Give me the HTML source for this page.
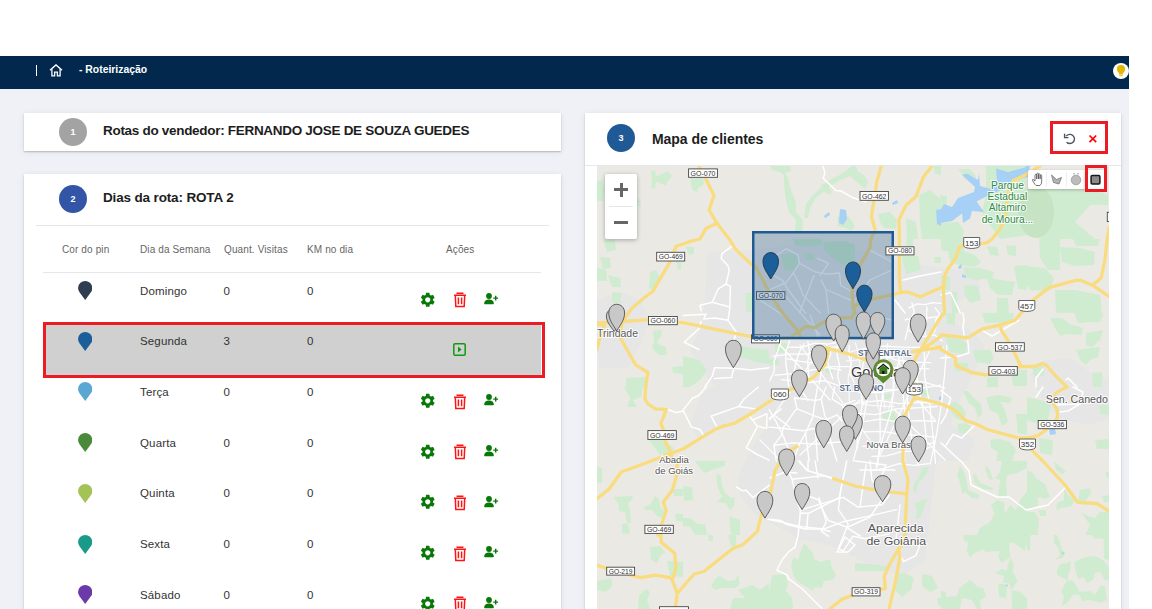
<!DOCTYPE html>
<html><head><meta charset="utf-8">
<style>
*{box-sizing:border-box;margin:0;padding:0}
html,body{width:1152px;height:609px;overflow:hidden;background:#fff;font-family:"Liberation Sans",sans-serif;position:relative}
.abs{position:absolute}
#nav{left:0;top:56px;width:1129px;height:33px;background:#02294d;overflow:hidden}
#bg{left:0;top:89px;width:1129px;height:520px;background:#f0f1f6}
.card{position:absolute;background:#fff;box-shadow:0 1px 1.5px rgba(0,0,0,0.22),0 1px 7px rgba(0,0,0,0.07)}
.circ{position:absolute;width:28px;height:28px;border-radius:50%;color:#fff;font-size:9px;font-weight:bold;text-align:center;line-height:28px}
.ttl{position:absolute;font-size:14px;font-weight:bold;color:#1d1d1d;white-space:nowrap;letter-spacing:-0.1px}
.th{position:absolute;font-size:10px;color:#666;white-space:nowrap;top:243.5px;letter-spacing:0.12px}
.td{position:absolute;font-size:11.5px;color:#333;white-space:nowrap;letter-spacing:0.15px}
.hr{position:absolute;height:1px;background:#e6e7ec}
</style></head><body>
<div id="nav" class="abs">
  <div class="abs" style="left:36px;top:9px;width:1px;height:11px;background:#fff"></div>
  <svg class="abs" style="left:49px;top:8px" width="14" height="13" viewBox="0 0 14 13"><path d="M1 6.3 L7 0.9 L13 6.3" fill="none" stroke="#fff" stroke-width="1.4" stroke-linejoin="miter"/><path d="M2.9 5.2 V11.9 H5.6 V8.2 H8.4 V11.9 H11.1 V5.2" fill="none" stroke="#fff" stroke-width="1.3"/></svg>
  <div class="abs" style="left:79px;top:8px;font-size:10.4px;font-weight:bold;color:#fff;letter-spacing:0px">- Roteirização</div>
  <div class="abs" style="left:1113px;top:7px;width:16px;height:16px;border-radius:50%;background:#fff"></div>
  <svg class="abs" style="left:1115px;top:8px" width="12" height="14" viewBox="0 0 12 14"><circle cx="6" cy="5" r="4.1" fill="#e5b800"/><path d="M3.6 7.5 H8.4 L7.9 10.6 H4.1Z" fill="#e5b800"/><rect x="4.3" y="10.9" width="3.4" height="1.4" fill="#ecc850"/></svg>
</div>
<div id="bg" class="abs"></div>

<!-- card 1 -->
<div class="card" style="left:24px;top:113px;width:537px;height:38px"></div>
<div class="circ" style="left:59px;top:118px;background:#a3a3a3">1</div>
<div class="ttl" style="left:103px;top:123px;font-size:13.5px;letter-spacing:-0.3px">Rotas do vendedor: FERNANDO JOSE DE SOUZA GUEDES</div>

<!-- card 2 -->
<div class="card" style="left:24px;top:174px;width:537px;height:460px"></div>
<div class="circ" style="left:59px;top:185px;background:#3355a5">2</div>
<div class="ttl" style="left:103px;top:190px;font-size:13.5px;letter-spacing:-0.15px">Dias da rota: ROTA 2</div>
<div class="hr" style="left:36px;top:225px;width:513px"></div>
<div class="th" style="left:62px">Cor do pin</div>
<div class="th" style="left:140px">Dia da Semana</div>
<div class="th" style="left:224px">Quant. Visitas</div>
<div class="th" style="left:307px">KM no dia</div>
<div class="th" style="left:446px">Ações</div>
<div class="hr" style="left:43px;top:272px;width:498px"></div>

<div id="rows">
<svg class="abs" style="left:78px;top:281.0px" width="14.4" height="19" viewBox="0 0 14.4 19"><path d="M7.2 19 L1.5 11.34 A7.1 7.1 0 1 1 12.9 11.34 Z" fill="#2d3e50"/></svg>
<div class="td" style="left:140px;top:284.5px">Domingo</div>
<div class="td" style="left:223.5px;top:284.5px">0</div>
<div class="td" style="left:307px;top:284.5px">0</div>
<svg class="abs" style="left:418.65px;top:290.55px" width="17.5" height="17.5" viewBox="0 0 24 24"><path fill="#087808" d="M19.14 12.94c.04-.3.06-.61.06-.94 0-.32-.02-.64-.07-.94l2.03-1.58a.49.49 0 0 0 .12-.61l-1.92-3.32a.488.488 0 0 0-.59-.22l-2.39.96c-.5-.38-1.03-.7-1.62-.94l-.36-2.54a.484.484 0 0 0-.48-.41h-3.84c-.24 0-.43.17-.47.41l-.36 2.54c-.59.24-1.13.57-1.62.94l-2.39-.96a.49.49 0 0 0-.59.22L2.74 8.87c-.12.21-.08.47.12.61l2.03 1.58c-.05.3-.09.63-.09.94s.02.64.07.94l-2.03 1.58a.49.49 0 0 0-.12.61l1.92 3.32c.12.22.37.29.59.22l2.39-.96c.5.38 1.03.7 1.62.94l.36 2.54c.05.24.24.41.48.41h3.84c.24 0 .44-.17.47-.41l.36-2.54c.59-.24 1.13-.56 1.62-.94l2.39.96c.22.08.47 0 .59-.22l1.92-3.32c.12-.22.07-.47-.12-.61l-2.01-1.58zM12 15.6c-1.98 0-3.6-1.62-3.6-3.6s1.62-3.6 3.6-3.6 3.6 1.62 3.6 3.6-1.62 3.6-3.6 3.6z"/></svg>
<svg class="abs" style="left:452.5px;top:292.1px" width="14" height="16" viewBox="0 0 14 16"><path d="M3.5 1.3 H10.5 M1 3.2 H13 M2.3 3.2 L2.8 14.6 H11.2 L11.7 3.2 M5.4 5.5 V12.3 M8.6 5.5 V12.3" fill="none" stroke="#ff1414" stroke-width="1.5"/></svg>
<svg class="abs" style="left:484.0px;top:292.8px" width="15" height="12" viewBox="0 0 15 12"><circle cx="5" cy="3" r="2.9" fill="#087808"/><path d="M0.2 10.6 C0.2 7.4 2.5 6.4 5 6.4 C7.5 6.4 9.8 7.4 9.8 10.6 Q9.8 11.2 9.2 11.2 H0.8 Q0.2 11.2 0.2 10.6Z" fill="#087808"/><path d="M9.3 5.1 H14.1 M11.7 2.7 V7.5" stroke="#087808" stroke-width="1.4"/></svg>
<div class="abs" style="left:43px;top:322.3px;width:498px;height:55.5px;background:#d0d0d0"></div>
<div class="abs" style="left:43px;top:322.3px;width:502px;height:55.5px;border:3px solid #ec1c24"></div>
<svg class="abs" style="left:78px;top:331.7px" width="14.4" height="19" viewBox="0 0 14.4 19"><path d="M7.2 19 L1.5 11.34 A7.1 7.1 0 1 1 12.9 11.34 Z" fill="#1a5e9a"/></svg>
<div class="td" style="left:140px;top:335.2px">Segunda</div>
<div class="td" style="left:223.5px;top:335.2px">3</div>
<div class="td" style="left:307px;top:335.2px">0</div>
<svg class="abs" style="left:453px;top:343px" width="13" height="13" viewBox="0 0 13 13"><rect x="0.8" y="0.8" width="11.4" height="11.4" rx="1.2" fill="none" stroke="#119911" stroke-width="1.5"/><path d="M5 3.6 L8.6 6.5 L5 9.4Z" fill="#119911"/></svg>
<svg class="abs" style="left:78px;top:382.4px" width="14.4" height="19" viewBox="0 0 14.4 19"><path d="M7.2 19 L1.5 11.34 A7.1 7.1 0 1 1 12.9 11.34 Z" fill="#5aa7d3"/></svg>
<div class="td" style="left:140px;top:385.9px">Terça</div>
<div class="td" style="left:223.5px;top:385.9px">0</div>
<div class="td" style="left:307px;top:385.9px">0</div>
<svg class="abs" style="left:418.65px;top:391.95px" width="17.5" height="17.5" viewBox="0 0 24 24"><path fill="#087808" d="M19.14 12.94c.04-.3.06-.61.06-.94 0-.32-.02-.64-.07-.94l2.03-1.58a.49.49 0 0 0 .12-.61l-1.92-3.32a.488.488 0 0 0-.59-.22l-2.39.96c-.5-.38-1.03-.7-1.62-.94l-.36-2.54a.484.484 0 0 0-.48-.41h-3.84c-.24 0-.43.17-.47.41l-.36 2.54c-.59.24-1.13.57-1.62.94l-2.39-.96a.49.49 0 0 0-.59.22L2.74 8.87c-.12.21-.08.47.12.61l2.03 1.58c-.05.3-.09.63-.09.94s.02.64.07.94l-2.03 1.58a.49.49 0 0 0-.12.61l1.92 3.32c.12.22.37.29.59.22l2.39-.96c.5.38 1.03.7 1.62.94l.36 2.54c.05.24.24.41.48.41h3.84c.24 0 .44-.17.47-.41l.36-2.54c.59-.24 1.13-.56 1.62-.94l2.39.96c.22.08.47 0 .59-.22l1.92-3.32c.12-.22.07-.47-.12-.61l-2.01-1.58zM12 15.6c-1.98 0-3.6-1.62-3.6-3.6s1.62-3.6 3.6-3.6 3.6 1.62 3.6 3.6-1.62 3.6-3.6 3.6z"/></svg>
<svg class="abs" style="left:452.5px;top:393.5px" width="14" height="16" viewBox="0 0 14 16"><path d="M3.5 1.3 H10.5 M1 3.2 H13 M2.3 3.2 L2.8 14.6 H11.2 L11.7 3.2 M5.4 5.5 V12.3 M8.6 5.5 V12.3" fill="none" stroke="#ff1414" stroke-width="1.5"/></svg>
<svg class="abs" style="left:484.0px;top:394.2px" width="15" height="12" viewBox="0 0 15 12"><circle cx="5" cy="3" r="2.9" fill="#087808"/><path d="M0.2 10.6 C0.2 7.4 2.5 6.4 5 6.4 C7.5 6.4 9.8 7.4 9.8 10.6 Q9.8 11.2 9.2 11.2 H0.8 Q0.2 11.2 0.2 10.6Z" fill="#087808"/><path d="M9.3 5.1 H14.1 M11.7 2.7 V7.5" stroke="#087808" stroke-width="1.4"/></svg>
<svg class="abs" style="left:78px;top:433.1px" width="14.4" height="19" viewBox="0 0 14.4 19"><path d="M7.2 19 L1.5 11.34 A7.1 7.1 0 1 1 12.9 11.34 Z" fill="#4a8a3a"/></svg>
<div class="td" style="left:140px;top:436.6px">Quarta</div>
<div class="td" style="left:223.5px;top:436.6px">0</div>
<div class="td" style="left:307px;top:436.6px">0</div>
<svg class="abs" style="left:418.65px;top:442.65px" width="17.5" height="17.5" viewBox="0 0 24 24"><path fill="#087808" d="M19.14 12.94c.04-.3.06-.61.06-.94 0-.32-.02-.64-.07-.94l2.03-1.58a.49.49 0 0 0 .12-.61l-1.92-3.32a.488.488 0 0 0-.59-.22l-2.39.96c-.5-.38-1.03-.7-1.62-.94l-.36-2.54a.484.484 0 0 0-.48-.41h-3.84c-.24 0-.43.17-.47.41l-.36 2.54c-.59.24-1.13.57-1.62.94l-2.39-.96a.49.49 0 0 0-.59.22L2.74 8.87c-.12.21-.08.47.12.61l2.03 1.58c-.05.3-.09.63-.09.94s.02.64.07.94l-2.03 1.58a.49.49 0 0 0-.12.61l1.92 3.32c.12.22.37.29.59.22l2.39-.96c.5.38 1.03.7 1.62.94l.36 2.54c.05.24.24.41.48.41h3.84c.24 0 .44-.17.47-.41l.36-2.54c.59-.24 1.13-.56 1.62-.94l2.39.96c.22.08.47 0 .59-.22l1.92-3.32c.12-.22.07-.47-.12-.61l-2.01-1.58zM12 15.6c-1.98 0-3.6-1.62-3.6-3.6s1.62-3.6 3.6-3.6 3.6 1.62 3.6 3.6-1.62 3.6-3.6 3.6z"/></svg>
<svg class="abs" style="left:452.5px;top:444.2px" width="14" height="16" viewBox="0 0 14 16"><path d="M3.5 1.3 H10.5 M1 3.2 H13 M2.3 3.2 L2.8 14.6 H11.2 L11.7 3.2 M5.4 5.5 V12.3 M8.6 5.5 V12.3" fill="none" stroke="#ff1414" stroke-width="1.5"/></svg>
<svg class="abs" style="left:484.0px;top:444.9px" width="15" height="12" viewBox="0 0 15 12"><circle cx="5" cy="3" r="2.9" fill="#087808"/><path d="M0.2 10.6 C0.2 7.4 2.5 6.4 5 6.4 C7.5 6.4 9.8 7.4 9.8 10.6 Q9.8 11.2 9.2 11.2 H0.8 Q0.2 11.2 0.2 10.6Z" fill="#087808"/><path d="M9.3 5.1 H14.1 M11.7 2.7 V7.5" stroke="#087808" stroke-width="1.4"/></svg>
<svg class="abs" style="left:78px;top:483.8px" width="14.4" height="19" viewBox="0 0 14.4 19"><path d="M7.2 19 L1.5 11.34 A7.1 7.1 0 1 1 12.9 11.34 Z" fill="#a2c355"/></svg>
<div class="td" style="left:140px;top:487.3px">Quinta</div>
<div class="td" style="left:223.5px;top:487.3px">0</div>
<div class="td" style="left:307px;top:487.3px">0</div>
<svg class="abs" style="left:418.65px;top:493.35px" width="17.5" height="17.5" viewBox="0 0 24 24"><path fill="#087808" d="M19.14 12.94c.04-.3.06-.61.06-.94 0-.32-.02-.64-.07-.94l2.03-1.58a.49.49 0 0 0 .12-.61l-1.92-3.32a.488.488 0 0 0-.59-.22l-2.39.96c-.5-.38-1.03-.7-1.62-.94l-.36-2.54a.484.484 0 0 0-.48-.41h-3.84c-.24 0-.43.17-.47.41l-.36 2.54c-.59.24-1.13.57-1.62.94l-2.39-.96a.49.49 0 0 0-.59.22L2.74 8.87c-.12.21-.08.47.12.61l2.03 1.58c-.05.3-.09.63-.09.94s.02.64.07.94l-2.03 1.58a.49.49 0 0 0-.12.61l1.92 3.32c.12.22.37.29.59.22l2.39-.96c.5.38 1.03.7 1.62.94l.36 2.54c.05.24.24.41.48.41h3.84c.24 0 .44-.17.47-.41l.36-2.54c.59-.24 1.13-.56 1.62-.94l2.39.96c.22.08.47 0 .59-.22l1.92-3.32c.12-.22.07-.47-.12-.61l-2.01-1.58zM12 15.6c-1.98 0-3.6-1.62-3.6-3.6s1.62-3.6 3.6-3.6 3.6 1.62 3.6 3.6-1.62 3.6-3.6 3.6z"/></svg>
<svg class="abs" style="left:452.5px;top:494.9px" width="14" height="16" viewBox="0 0 14 16"><path d="M3.5 1.3 H10.5 M1 3.2 H13 M2.3 3.2 L2.8 14.6 H11.2 L11.7 3.2 M5.4 5.5 V12.3 M8.6 5.5 V12.3" fill="none" stroke="#ff1414" stroke-width="1.5"/></svg>
<svg class="abs" style="left:484.0px;top:495.6px" width="15" height="12" viewBox="0 0 15 12"><circle cx="5" cy="3" r="2.9" fill="#087808"/><path d="M0.2 10.6 C0.2 7.4 2.5 6.4 5 6.4 C7.5 6.4 9.8 7.4 9.8 10.6 Q9.8 11.2 9.2 11.2 H0.8 Q0.2 11.2 0.2 10.6Z" fill="#087808"/><path d="M9.3 5.1 H14.1 M11.7 2.7 V7.5" stroke="#087808" stroke-width="1.4"/></svg>
<svg class="abs" style="left:78px;top:534.5px" width="14.4" height="19" viewBox="0 0 14.4 19"><path d="M7.2 19 L1.5 11.34 A7.1 7.1 0 1 1 12.9 11.34 Z" fill="#1a9a88"/></svg>
<div class="td" style="left:140px;top:538.0px">Sexta</div>
<div class="td" style="left:223.5px;top:538.0px">0</div>
<div class="td" style="left:307px;top:538.0px">0</div>
<svg class="abs" style="left:418.65px;top:544.05px" width="17.5" height="17.5" viewBox="0 0 24 24"><path fill="#087808" d="M19.14 12.94c.04-.3.06-.61.06-.94 0-.32-.02-.64-.07-.94l2.03-1.58a.49.49 0 0 0 .12-.61l-1.92-3.32a.488.488 0 0 0-.59-.22l-2.39.96c-.5-.38-1.03-.7-1.62-.94l-.36-2.54a.484.484 0 0 0-.48-.41h-3.84c-.24 0-.43.17-.47.41l-.36 2.54c-.59.24-1.13.57-1.62.94l-2.39-.96a.49.49 0 0 0-.59.22L2.74 8.87c-.12.21-.08.47.12.61l2.03 1.58c-.05.3-.09.63-.09.94s.02.64.07.94l-2.03 1.58a.49.49 0 0 0-.12.61l1.92 3.32c.12.22.37.29.59.22l2.39-.96c.5.38 1.03.7 1.62.94l.36 2.54c.05.24.24.41.48.41h3.84c.24 0 .44-.17.47-.41l.36-2.54c.59-.24 1.13-.56 1.62-.94l2.39.96c.22.08.47 0 .59-.22l1.92-3.32c.12-.22.07-.47-.12-.61l-2.01-1.58zM12 15.6c-1.98 0-3.6-1.62-3.6-3.6s1.62-3.6 3.6-3.6 3.6 1.62 3.6 3.6-1.62 3.6-3.6 3.6z"/></svg>
<svg class="abs" style="left:452.5px;top:545.6px" width="14" height="16" viewBox="0 0 14 16"><path d="M3.5 1.3 H10.5 M1 3.2 H13 M2.3 3.2 L2.8 14.6 H11.2 L11.7 3.2 M5.4 5.5 V12.3 M8.6 5.5 V12.3" fill="none" stroke="#ff1414" stroke-width="1.5"/></svg>
<svg class="abs" style="left:484.0px;top:546.3px" width="15" height="12" viewBox="0 0 15 12"><circle cx="5" cy="3" r="2.9" fill="#087808"/><path d="M0.2 10.6 C0.2 7.4 2.5 6.4 5 6.4 C7.5 6.4 9.8 7.4 9.8 10.6 Q9.8 11.2 9.2 11.2 H0.8 Q0.2 11.2 0.2 10.6Z" fill="#087808"/><path d="M9.3 5.1 H14.1 M11.7 2.7 V7.5" stroke="#087808" stroke-width="1.4"/></svg>
<svg class="abs" style="left:78px;top:585.2px" width="14.4" height="19" viewBox="0 0 14.4 19"><path d="M7.2 19 L1.5 11.34 A7.1 7.1 0 1 1 12.9 11.34 Z" fill="#6c3aa8"/></svg>
<div class="td" style="left:140px;top:588.7px">Sábado</div>
<div class="td" style="left:223.5px;top:588.7px">0</div>
<div class="td" style="left:307px;top:588.7px">0</div>
<svg class="abs" style="left:418.65px;top:594.75px" width="17.5" height="17.5" viewBox="0 0 24 24"><path fill="#087808" d="M19.14 12.94c.04-.3.06-.61.06-.94 0-.32-.02-.64-.07-.94l2.03-1.58a.49.49 0 0 0 .12-.61l-1.92-3.32a.488.488 0 0 0-.59-.22l-2.39.96c-.5-.38-1.03-.7-1.62-.94l-.36-2.54a.484.484 0 0 0-.48-.41h-3.84c-.24 0-.43.17-.47.41l-.36 2.54c-.59.24-1.13.57-1.62.94l-2.39-.96a.49.49 0 0 0-.59.22L2.74 8.87c-.12.21-.08.47.12.61l2.03 1.58c-.05.3-.09.63-.09.94s.02.64.07.94l-2.03 1.58a.49.49 0 0 0-.12.61l1.92 3.32c.12.22.37.29.59.22l2.39-.96c.5.38 1.03.7 1.62.94l.36 2.54c.05.24.24.41.48.41h3.84c.24 0 .44-.17.47-.41l.36-2.54c.59-.24 1.13-.56 1.62-.94l2.39.96c.22.08.47 0 .59-.22l1.92-3.32c.12-.22.07-.47-.12-.61l-2.01-1.58zM12 15.6c-1.98 0-3.6-1.62-3.6-3.6s1.62-3.6 3.6-3.6 3.6 1.62 3.6 3.6-1.62 3.6-3.6 3.6z"/></svg>
<svg class="abs" style="left:452.5px;top:596.3px" width="14" height="16" viewBox="0 0 14 16"><path d="M3.5 1.3 H10.5 M1 3.2 H13 M2.3 3.2 L2.8 14.6 H11.2 L11.7 3.2 M5.4 5.5 V12.3 M8.6 5.5 V12.3" fill="none" stroke="#ff1414" stroke-width="1.5"/></svg>
<svg class="abs" style="left:484.0px;top:597.0px" width="15" height="12" viewBox="0 0 15 12"><circle cx="5" cy="3" r="2.9" fill="#087808"/><path d="M0.2 10.6 C0.2 7.4 2.5 6.4 5 6.4 C7.5 6.4 9.8 7.4 9.8 10.6 Q9.8 11.2 9.2 11.2 H0.8 Q0.2 11.2 0.2 10.6Z" fill="#087808"/><path d="M9.3 5.1 H14.1 M11.7 2.7 V7.5" stroke="#087808" stroke-width="1.4"/></svg>
</div>
<!--endrows-->

<!-- card 3 -->
<div class="card" style="left:585px;top:113px;width:536px;height:520px"></div>
<div class="circ" style="left:607px;top:124px;background:#1f5a96">3</div>
<div class="ttl" style="left:652px;top:131px;letter-spacing:-0.05px">Mapa de clientes</div>
<div class="hr" style="left:585px;top:165px;width:536px"></div>
<!--map--><svg id="map" class="abs" style="left:597px;top:166px" width="512" height="443" viewBox="597 166 512 443">
<rect x="597" y="166" width="512" height="443" fill="#ebe9e4"/>
<polygon points="707,252 752,250 800,245 860,250 900,262 945,268 975,272 980,290 960,300 945,320 970,330 985,345 975,372 960,400 945,440 935,470 930,520 925,560 905,575 880,570 860,560 830,545 800,540 780,528 770,522 755,515 740,495 738,478 750,450 768,425 760,410 735,420 700,440 690,425 700,395 715,385 700,370 690,350 700,330 705,300" fill="#e6e6e7"/>
<polygon points="597,300 620,292 640,300 650,318 640,345 628,368 600,368 597,350" fill="#e6e6e7"/>
<polygon points="1030,375 1045,360 1070,358 1090,372 1109,380 1109,420 1085,425 1060,418 1045,405" fill="#e6e6e7"/>
<polygon points="941,420 960,430 975,440 968,461 941,461" fill="#e6e6e7"/>
<polygon points="950,272 978,272 980,290 952,290" fill="#e6e6e7"/>
<polygon points="651,172 655,170 656,176 662,174 668,171 672,176 668,181 666,186 660,183 656,182 655,189 651,188 652,180" fill="#d0ecd0"/>
<polygon points="597,181 602,180 605,190 603,198 605,201 597,201" fill="#d0ecd0"/>
<polygon points="637,198 640,200 641,207 638,206" fill="#d0ecd0"/>
<polygon points="690,178 703,178 704,184 698,188 697,192 693,190 691,185" fill="#d0ecd0"/>
<polygon points="686,246 693,247 694,253 690,255 687,251" fill="#d0ecd0"/>
<polygon points="770,166 790,166 791,171 785,173 788,178 792,193 796,203 796,212 803,220 802,232 795,232 796,220 789,212 786,200 784,185 784,175 780,172 772,170" fill="#d0ecd0"/>
<polygon points="804,218 806,204 812,196 818,190 828,181 838,176 846,171 852,166 856,166 858,172 864,175 868,182 865,189 858,183 850,176 840,180 830,186 816,198 810,208 808,218" fill="#d0ecd0"/>
<polygon points="821,185 826,183 832,192 830,195 824,192" fill="#d0ecd0"/>
<polygon points="837,218 842,212 850,218 855,226 852,231 845,228 838,226" fill="#d0ecd0"/>
<polygon points="878,214 890,212 897,220 896,229 884,228 880,222" fill="#d0ecd0"/>
<polygon points="906,218 916,222 918,239 907,239" fill="#d0ecd0"/>
<polygon points="919,195 930,190 941,200 941,239 922,239 920,222" fill="#d0ecd0"/>
<polygon points="933,166 941,166 941,175 935,174" fill="#d0ecd0"/>
<polygon points="958,169 970,169 976,176 975,182 966,180" fill="#d0ecd0"/>
<polygon points="940,195 947,196 947,211 940,211" fill="#d0ecd0"/>
<polygon points="940,223 958,222 964,230 962,239 941,239" fill="#d0ecd0"/>
<polygon points="986,166 1026,166 1026,189 1048,189 1060,185 1090,189 1108,195 1108,205 1090,205 1075,222 1095,239 1043,239 1030,235 1000,239 990,225 982,212 986,195" fill="#d0ecd0"/>
<polygon points="941,239 964,239 964,251 950,252 941,250" fill="#d0ecd0"/>
<polygon points="948,251 960,250 975,255 981,262 975,267 960,265 950,262" fill="#d0ecd0"/>
<polygon points="963,267 980,268 994,272 992,278 975,280 965,277" fill="#d0ecd0"/>
<polygon points="986,276 1000,280 1015,282 1012,295 998,295 990,288" fill="#d0ecd0"/>
<polygon points="964,285 978,286 981,300 970,303 965,296" fill="#d0ecd0"/>
<polygon points="987,246 997,247 999,256 990,255" fill="#d0ecd0"/>
<polygon points="1006,245 1016,246 1016,256 1008,255" fill="#d0ecd0"/>
<polygon points="1014,266 1027,265 1027,290 1018,289" fill="#d0ecd0"/>
<polygon points="997,298 1008,298 1009,313 997,313" fill="#d0ecd0"/>
<polygon points="941,276 950,276 950,290 941,290" fill="#d0ecd0"/>
<polygon points="951,292 957,292 958,313 952,313" fill="#d0ecd0"/>
<polygon points="1039,239 1060,239 1060,270 1048,270 1040,258" fill="#d0ecd0"/>
<polygon points="1060,247 1080,248 1095,252 1094,265 1075,266 1062,262" fill="#d0ecd0"/>
<polygon points="1073,239 1100,239 1098,246 1076,246" fill="#d0ecd0"/>
<polygon points="1027,266 1045,268 1054,278 1050,291 1030,290 1027,285" fill="#d0ecd0"/>
<polygon points="1055,290 1075,290 1100,295 1102,313 1056,313" fill="#d0ecd0"/>
<polygon points="603,239 615,240 616,250 607,252" fill="#d0ecd0"/>
<polygon points="600,257 610,258 611,268 603,269" fill="#d0ecd0"/>
<polygon points="597,268 606,270 607,281 597,281" fill="#d0ecd0"/>
<polygon points="608,275 620,278 621,287 612,287" fill="#d0ecd0"/>
<polygon points="612,292 621,293 621,303 612,303" fill="#d0ecd0"/>
<polygon points="650,272 656,270 660,278 656,289 649,289" fill="#d0ecd0"/>
<polygon points="676,261 681,262 681,270 678,270" fill="#d0ecd0"/>
<polygon points="687,247 694,247 694,254 689,255" fill="#d0ecd0"/>
<polygon points="745,293 752,293 752,312 746,312" fill="#d0ecd0"/>
<polygon points="793,239 822,239 822,246 795,246" fill="#d0ecd0"/>
<polygon points="823,242 845,241 855,245 855,268 845,266 832,258 824,250" fill="#d0ecd0"/>
<polygon points="781,254 795,253 799,262 797,270 784,270" fill="#d0ecd0"/>
<polygon points="805,253 815,254 814,260 806,260" fill="#d0ecd0"/>
<polygon points="901,255 918,256 921,270 906,274" fill="#d0ecd0"/>
<polygon points="906,239 913,239 913,246 907,246" fill="#d0ecd0"/>
<polygon points="934,257 941,257 941,263 935,263" fill="#d0ecd0"/>
<polygon points="653,331 662,330 661,336 657,342 660,345 666,347 667,355 659,355 652,348 654,340" fill="#d0ecd0"/>
<polygon points="672,367 683,366 683,374 673,373" fill="#d0ecd0"/>
<polygon points="626,378 646,377 648,387 626,387" fill="#d0ecd0"/>
<polygon points="722,345 740,346 752,348 769,350 769,364 755,362 745,358 730,356" fill="#d0ecd0"/>
<polygon points="683,356 700,360 707,370 700,380 690,387 683,387" fill="#d0ecd0"/>
<polygon points="774,344 788,343 788,352 776,353" fill="#d0ecd0"/>
<polygon points="769,359 779,359 779,365 769,365" fill="#d0ecd0"/>
<polygon points="825,368 833,368 833,373 826,373" fill="#d0ecd0"/>
<polygon points="982,313 1014,313 1012,322 985,323" fill="#d0ecd0"/>
<polygon points="945,337 960,338 968,345 965,354 950,352" fill="#d0ecd0"/>
<polygon points="973,350 990,350 994,358 990,364 976,362" fill="#d0ecd0"/>
<polygon points="953,362 968,363 969,371 956,371" fill="#d0ecd0"/>
<polygon points="987,377 998,377 998,387 987,387" fill="#d0ecd0"/>
<polygon points="1011,370 1027,370 1027,386 1013,386" fill="#d0ecd0"/>
<polygon points="946,313 955,313 955,325 947,324" fill="#d0ecd0"/>
<polygon points="1050,318 1062,318 1070,324 1083,328 1082,335 1068,334 1060,336 1055,328" fill="#d0ecd0"/>
<polygon points="1074,313 1104,313 1100,322 1078,323" fill="#d0ecd0"/>
<polygon points="1086,333 1103,330 1100,340 1092,347 1086,345" fill="#d0ecd0"/>
<polygon points="1076,350 1090,348 1100,347 1098,357 1090,360 1086,365 1080,360" fill="#d0ecd0"/>
<polygon points="1032,367 1044,366 1044,376 1034,376" fill="#d0ecd0"/>
<polygon points="1092,373 1102,372 1102,387 1093,387" fill="#d0ecd0"/>
<polygon points="624,387 643,387 641,397 633,400 637,407 627,407 630,398" fill="#d0ecd0"/>
<polygon points="649,440 662,440 674,448 672,455 660,455" fill="#d0ecd0"/>
<polygon points="882,394 891,394 890,399 883,399" fill="#d0ecd0"/>
<polygon points="882,415 893,410 898,422 885,422" fill="#d0ecd0"/>
<polygon points="919,390 930,389 929,396 920,396" fill="#d0ecd0"/>
<polygon points="949,405 955,402 962,406 966,414 963,421 955,418 951,412" fill="#d0ecd0"/>
<polygon points="963,391 968,391 974,398 981,404 982,414 978,418 975,408 968,402" fill="#d0ecd0"/>
<polygon points="986,398 992,396 1000,395 1012,398 1010,403 1000,402 1005,410 1008,422 1002,426 998,414 990,410" fill="#d0ecd0"/>
<polygon points="957,424 966,423 971,427 966,434 959,433" fill="#d0ecd0"/>
<polygon points="990,440 1000,439 1010,442 1016,450 1012,461 996,461 998,452 991,448" fill="#d0ecd0"/>
<polygon points="1016,414 1027,414 1027,435 1018,433" fill="#d0ecd0"/>
<polygon points="1027,397 1040,400 1051,405 1048,420 1035,423 1027,420" fill="#d0ecd0"/>
<polygon points="1099,405 1109,405 1109,415 1100,414" fill="#d0ecd0"/>
<polygon points="1095,440 1109,439 1109,449 1097,449" fill="#d0ecd0"/>
<polygon points="1039,438 1053,440 1052,455 1040,453" fill="#d0ecd0"/>
<polygon points="597,467 602,468 602,483 597,483" fill="#d0ecd0"/>
<polygon points="613,497 633,496 631,501 628,503 630,510 631,523 627,523 625,512 619,511 618,503" fill="#d0ecd0"/>
<polygon points="643,507 650,505 655,496 659,499 660,506 665,512 664,519 657,516 652,510 646,510" fill="#d0ecd0"/>
<polygon points="622,524 628,523 630,534 622,533" fill="#d0ecd0"/>
<polygon points="673,489 683,489 683,496 674,496" fill="#d0ecd0"/>
<polygon points="675,514 683,514 683,522 676,521" fill="#d0ecd0"/>
<polygon points="695,461 725,461 725,466 712,470 705,473 700,468" fill="#d0ecd0"/>
<polygon points="716,474 721,475 722,486 725,493 731,498 735,497 734,506 730,510 726,503 716,502 722,497 718,488" fill="#d0ecd0"/>
<polygon points="683,486 692,487 693,500 684,501" fill="#d0ecd0"/>
<polygon points="683,518 690,518 698,524 705,524 707,535 695,535 690,527 683,526" fill="#d0ecd0"/>
<polygon points="729,516 740,520 740,535 731,535" fill="#d0ecd0"/>
<polygon points="922,468 929,467 926,475 919,482 916,492 913,493 914,484 919,476" fill="#d0ecd0"/>
<polygon points="914,504 922,500 928,499 924,508 920,518 915,519 917,510" fill="#d0ecd0"/>
<polygon points="855,563 870,564 886,566 886,571 870,571 855,571" fill="#d0ecd0"/>
<polygon points="895,574 905,573 914,578 911,590 902,597 895,590" fill="#d0ecd0"/>
<polygon points="922,574 932,576 938,588 930,592 922,586" fill="#d0ecd0"/>
<polygon points="937,598 941,598 941,606 938,605" fill="#d0ecd0"/>
<polygon points="804,543 813,553 814,559 821,562 830,559 832,568 836,575 833,580 824,581 822,588 815,587 813,591 805,586 797,581 793,574 791,565 794,557 798,560" fill="#d0ecd0"/>
<polygon points="772,575 785,574 788,584 786,591 792,598 793,609 769,609 769,591" fill="#d0ecd0"/>
<polygon points="650,547 660,546 665,552 660,556 657,563 651,560" fill="#d0ecd0"/>
<polygon points="667,561 683,562 683,577 670,576" fill="#d0ecd0"/>
<polygon points="711,586 716,578 720,576 728,581 735,580 738,575 740,584 735,588 722,588 715,590" fill="#d0ecd0"/>
<polygon points="597,581 612,578 612,586 606,592 597,590" fill="#d0ecd0"/>
<polygon points="639,595 646,589 650,592 647,600 650,609 638,609" fill="#d0ecd0"/>
<polygon points="738,590 752,585 760,590 769,583 769,609 730,609 733,598 745,598" fill="#d0ecd0"/>
<polygon points="708,535 713,535 713,541 709,541" fill="#d0ecd0"/>
<polygon points="728,535 736,535 736,547 731,546" fill="#d0ecd0"/>
<polygon points="957,475 960,466 963,470 966,478 968,490 975,493 980,495 978,499 972,498 965,492 962,494 961,488 959,480" fill="#d0ecd0"/>
<polygon points="972.6,474 976,475 980,483 988,486 994,489 992,490 983,489 975,484" fill="#d0ecd0"/>
<polygon points="985,465 990,470 993,480 989,479 986,472" fill="#d0ecd0"/>
<polygon points="1002,461 1013,461 1009,470 1006,480 1007,497 998,497 1000,480 995,478 1000,472" fill="#d0ecd0"/>
<polygon points="1008,461 1027,461 1027,468 1015,474 1007,475" fill="#d0ecd0"/>
<polygon points="991,505 997,500 1004,502 1005,514 999,515 994,512" fill="#d0ecd0"/>
<polygon points="1027,491 1027,535 977,535 980,528 990,522 995,512 1005,514 1010,505 1016,510 1020,500" fill="#d0ecd0"/>
<polygon points="1027,471 1032,472 1036,478 1045,484 1048,492 1050,497 1045,499 1038,497 1038,505 1032,509 1027,509" fill="#d0ecd0"/>
<polygon points="1027,512 1035,512 1039,520 1038,535 1027,535" fill="#d0ecd0"/>
<polygon points="1054,461 1058,465 1062,468 1066,472 1062,474 1056,470" fill="#d0ecd0"/>
<polygon points="1064,488 1068,495 1074,500 1072,506 1062,508 1056,510 1057,503 1064,500" fill="#d0ecd0"/>
<polygon points="1080,490 1090,488 1091,493 1085,502 1078,502" fill="#d0ecd0"/>
<polygon points="1102,496 1109,495 1109,502 1104,502" fill="#d0ecd0"/>
<polygon points="1081,512 1088,516 1095,518 1100,512 1109,512 1109,535 1085,535 1090,525" fill="#d0ecd0"/>
<polygon points="1039,510 1046,510 1046,516 1040,516" fill="#d0ecd0"/>
<polygon points="1106,472 1109,472 1109,477 1106,477" fill="#d0ecd0"/>
<polygon points="962.9,535 964.1,541 968.3,542.3 967.7,546 966.5,550.8 970.2,558 973.8,553.2 983.5,549.6 986,552 1000.5,550.8 998,556.9 1001.8,563 1010.3,556.9 1009,542.3 1015,543.5 1024.8,550.8 1027,542.3 1027,535" fill="#d0ecd0"/>
<polygon points="1010.3,556.9 1014,565.4 1012.7,571.5 1017.5,581.2 1011.5,589.7 1009,583.6 1003,582.4 1004.2,576.3 994.5,572.7 1001.8,569 1006.6,570.2" fill="#d0ecd0"/>
<polygon points="998,584 1006.6,584 1006.6,598 999,597" fill="#d0ecd0"/>
<polygon points="1011.5,590 1020,592 1027,598 1027,609 1012,609" fill="#d0ecd0"/>
<polygon points="941,591 946,592 946,597 957,596 959,588.5 970,580 977.5,587 983.5,588.5 986,596 980,600.6 981,609 977,609 972,600 962,598 960,609 941,609" fill="#d0ecd0"/>
<polygon points="1054,535 1057,535 1060,542 1062,550 1066,553 1062,558 1055,560 1060,555 1058,548 1054,543" fill="#d0ecd0"/>
<polygon points="1057,570 1060,564 1067,563 1070,561 1071,568 1068,575 1068,581 1063,578 1057,575" fill="#d0ecd0"/>
<polygon points="1074,562 1083,558 1090,556 1098,557 1104,561 1109,568 1109,580 1105,580 1100,572 1095,573 1093,580 1087,583 1084,577 1078,579 1076,572" fill="#d0ecd0"/>
<polygon points="1066,582 1072,580 1078,588 1080,594 1073,595 1068,602 1062,606 1064,596 1061,592" fill="#d0ecd0"/>
<polygon points="1078,592 1090,591 1095,595 1100,586 1105,586 1107,600 1100,603 1090,600 1082,601" fill="#d0ecd0"/>
<polygon points="1092.6,535 1104.8,535 1104,538.6 1093,538.6" fill="#d0ecd0"/>
<polygon points="1103.5,535 1109,535 1109,560 1104,558" fill="#d0ecd0"/>
<polygon points="1027,535 1030.6,535 1030,550.8 1027,550" fill="#d0ecd0"/>
<ellipse cx="1036" cy="212" rx="18" ry="26" fill="#c6e4c3"/>
<polygon points="940,211 944,204 952,207 958,198 974,192 975,187 962,175 967,173.5 978,180 979,173.5 980,186 991,189 997,180 996,168.6 1008,172 1025,167.4 1026,166 1030,166 1028,177 1013,181 1004,189 991,194 976.5,201.5 984,212 972,211 970,218.5 963,223 962,213.6 952,221 940,223" fill="#a6d0f6"/>
<polygon points="840,209 846,210 847,219 843,225 839,223" fill="#a6d0f6"/>
<polygon points="824,216 829,212 830,215 825,218" fill="#a6d0f6"/>
<polygon points="892,203 897,200 898,203 893,205" fill="#a6d0f6"/>
<polygon points="936,210 941,209 941,226 937,224" fill="#a6d0f6"/>
<polygon points="1049,428 1055,429 1056,434 1050,435" fill="#a6d0f6"/>
<polygon points="1005.4,585 1008,584.8 1007,587.2" fill="#a6d0f6"/>
<polygon points="1061,551.4 1064,553 1063,555" fill="#a6d0f6"/>
<polygon points="958,267 961,264 962,268 959,269" fill="#a6d0f6"/>
<polygon points="962,274 966,276 966,278 962,277" fill="#a6d0f6"/>
<polygon points="939,397 941,396 941,400 939,400" fill="#a6d0f6"/>
<polyline points="823,166 825,173.5 823,178 836,190.5 841,191 854,198.4" fill="none" stroke="#ffffff" stroke-width="1.5" stroke-linejoin="round" stroke-linecap="round" />
<polyline points="854,198 866,202" fill="none" stroke="#ffffff" stroke-width="1.5" stroke-linejoin="round" stroke-linecap="round" />
<polyline points="731.6,246.3 721.9,253.6 721.3,258.4 728,265.7 729.2,270.6 726.1,284 718.2,288.8 712.2,302.2 700,305.2 701.2,310.7" fill="none" stroke="#ffffff" stroke-width="1.5" stroke-linejoin="round" stroke-linecap="round" />
<polyline points="726.1,284 730.4,286.4 729.8,307 729.2,313" fill="none" stroke="#ffffff" stroke-width="1.5" stroke-linejoin="round" stroke-linecap="round" />
<polyline points="712.2,302.2 729.8,307" fill="none" stroke="#ffffff" stroke-width="1.5" stroke-linejoin="round" stroke-linecap="round" />
<polyline points="683,315.4 706,314.2 703.7,319 714.6,317.9 728,320.3 729.2,313" fill="none" stroke="#ffffff" stroke-width="1.5" stroke-linejoin="round" stroke-linecap="round" />
<polyline points="728,320.3 736.5,332.4 734,339.7" fill="none" stroke="#ffffff" stroke-width="1.5" stroke-linejoin="round" stroke-linecap="round" />
<polyline points="701.2,321.5 698.8,328.8 684.2,342.2 698.8,349.5" fill="none" stroke="#ffffff" stroke-width="1.5" stroke-linejoin="round" stroke-linecap="round" />
<polyline points="714.6,367.7 734,368.3 751,370.1 769,367.7" fill="none" stroke="#ffffff" stroke-width="1.5" stroke-linejoin="round" stroke-linecap="round" />
<polyline points="714.6,367.7 712.2,376.2 704.9,387" fill="none" stroke="#ffffff" stroke-width="1.5" stroke-linejoin="round" stroke-linecap="round" />
<polyline points="734,368.3 731.6,377.4 714.6,378.6" fill="none" stroke="#ffffff" stroke-width="1.5" stroke-linejoin="round" stroke-linecap="round" />
<polyline points="706,387 698.8,395.5 692.7,398 683,410.1 691.5,427.1 700,429.5 703.7,435.6" fill="none" stroke="#ffffff" stroke-width="1.5" stroke-linejoin="round" stroke-linecap="round" />
<polyline points="758.3,387 743.8,399.2 738.9,406.4 711,416.2 717,427.1" fill="none" stroke="#ffffff" stroke-width="1.5" stroke-linejoin="round" stroke-linecap="round" />
<polyline points="738.9,406.4 755.9,408.9" fill="none" stroke="#ffffff" stroke-width="1.5" stroke-linejoin="round" stroke-linecap="round" />
<polyline points="748.6,415 757.1,425.9 765.6,428.3" fill="none" stroke="#ffffff" stroke-width="1.5" stroke-linejoin="round" stroke-linecap="round" />
<polyline points="753.5,419.8 766.8,413.7 766.8,428.3" fill="none" stroke="#ffffff" stroke-width="1.5" stroke-linejoin="round" stroke-linecap="round" />
<polyline points="757.1,427.1 746.2,447.8 758.3,455 769,460" fill="none" stroke="#ffffff" stroke-width="1.5" stroke-linejoin="round" stroke-linecap="round" />
<polyline points="667.5,409.5 676,412.5 683,411.3" fill="none" stroke="#ffffff" stroke-width="1.5" stroke-linejoin="round" stroke-linecap="round" />
<polyline points="736.5,487 742.5,490.8 746.2,490.2 752.9,497.5 769,485.3" fill="none" stroke="#ffffff" stroke-width="1.5" stroke-linejoin="round" stroke-linecap="round" />
<polyline points="798.2,461 808,470.7 832.2,478" fill="none" stroke="#ffffff" stroke-width="1.5" stroke-linejoin="round" stroke-linecap="round" />
<polyline points="808,461 808,470.7" fill="none" stroke="#ffffff" stroke-width="1.5" stroke-linejoin="round" stroke-linecap="round" />
<polyline points="809,496.2 818.8,499.9 822.5,509.6 828.5,520.5 845.5,526.6 860,536" fill="none" stroke="#ffffff" stroke-width="1.5" stroke-linejoin="round" stroke-linecap="round" />
<polyline points="800.6,509.6 798.2,535 795.1,547.2 789.7,550.8 782.4,559.3 776.9,570.2 787.2,575.1 788.4,578.7 801.8,588.5 822.5,609" fill="none" stroke="#ffffff" stroke-width="1.5" stroke-linejoin="round" stroke-linecap="round" />
<polyline points="800.6,513.2 809,513.2 839.5,497.5" fill="none" stroke="#ffffff" stroke-width="1.5" stroke-linejoin="round" stroke-linecap="round" />
<polyline points="769,519.3 781.2,520.5 786,524.2 805.5,529 820,529 829.8,531.5" fill="none" stroke="#ffffff" stroke-width="1.5" stroke-linejoin="round" stroke-linecap="round" />
<polyline points="846.8,461 840.7,490.2 839.5,497.5" fill="none" stroke="#ffffff" stroke-width="1.5" stroke-linejoin="round" stroke-linecap="round" />
<polyline points="808,514.5 806.7,529" fill="none" stroke="#ffffff" stroke-width="1.5" stroke-linejoin="round" stroke-linecap="round" />
<polyline points="885,495 870,517 848,527" fill="none" stroke="#ffffff" stroke-width="1.5" stroke-linejoin="round" stroke-linecap="round" />
<polyline points="855,461 886,465 882,475" fill="none" stroke="#ffffff" stroke-width="1.5" stroke-linejoin="round" stroke-linecap="round" />
<polyline points="866,465 860,507" fill="none" stroke="#ffffff" stroke-width="1.5" stroke-linejoin="round" stroke-linecap="round" />
<polyline points="901.2,556.9 903.6,561.7 915.8,555.7 919.4,547 918.2,542.3" fill="none" stroke="#ffffff" stroke-width="1.5" stroke-linejoin="round" stroke-linecap="round" />
<polyline points="837,552 845,537 855,545 848,552 837,552" fill="none" stroke="#ffffff" stroke-width="1.5" stroke-linejoin="round" stroke-linecap="round" />
<polyline points="961,461 969,471 971,485 997,497 1009,497 1026,510 1048,505 1065,488" fill="none" stroke="#ffffff" stroke-width="1.5" stroke-linejoin="round" stroke-linecap="round" />
<polyline points="941,390.6 950.7,398 945.9,415 941,423.5" fill="none" stroke="#ffffff" stroke-width="1.5" stroke-linejoin="round" stroke-linecap="round" />
<polyline points="945.9,445.3 953.2,434.4 961.7,438 973.8,425.9" fill="none" stroke="#ffffff" stroke-width="1.5" stroke-linejoin="round" stroke-linecap="round" />
<polyline points="941,442.9 960.4,461" fill="none" stroke="#ffffff" stroke-width="1.5" stroke-linejoin="round" stroke-linecap="round" />
<polyline points="962.9,313 964.1,320.3 962.9,326.4 964.1,334.9" fill="none" stroke="#ffffff" stroke-width="1.5" stroke-linejoin="round" stroke-linecap="round" />
<polyline points="983.5,331.2 992,336 1018.8,320.3" fill="none" stroke="#ffffff" stroke-width="1.5" stroke-linejoin="round" stroke-linecap="round" />
<polyline points="967.7,339.7 969,353 956.8,356.7 941,358" fill="none" stroke="#ffffff" stroke-width="1.5" stroke-linejoin="round" stroke-linecap="round" />
<polyline points="941,294.9 950.7,292.5 960.4,313" fill="none" stroke="#ffffff" stroke-width="1.5" stroke-linejoin="round" stroke-linecap="round" />
<polyline points="1036,397 1043,387" fill="none" stroke="#ffffff" stroke-width="1.5" stroke-linejoin="round" stroke-linecap="round" />
<polyline points="1060,412 1068,411 1080,404 1083,392 1073,387" fill="none" stroke="#ffffff" stroke-width="1.5" stroke-linejoin="round" stroke-linecap="round" />
<polyline points="1080,404 1055,405" fill="none" stroke="#ffffff" stroke-width="1.5" stroke-linejoin="round" stroke-linecap="round" />
<polyline points="1043,369 1036,378 1036,387" fill="none" stroke="#ffffff" stroke-width="1.5" stroke-linejoin="round" stroke-linecap="round" />
<polyline points="1066,380 1068,378 1077,387" fill="none" stroke="#ffffff" stroke-width="1.5" stroke-linejoin="round" stroke-linecap="round" />
<polyline points="903,280 920,276 941,272" fill="none" stroke="#ffffff" stroke-width="1.5" stroke-linejoin="round" stroke-linecap="round" />
<polyline points="895,300 905,313" fill="none" stroke="#ffffff" stroke-width="1.5" stroke-linejoin="round" stroke-linecap="round" />
<polyline points="792.3,479.2 823.9,475.6 833.6,479.2" fill="none" stroke="#ffffff" stroke-width="1.4" stroke-linejoin="round" stroke-linecap="round" />
<polyline points="806.9,470.7 799.6,461" fill="none" stroke="#ffffff" stroke-width="1.4" stroke-linejoin="round" stroke-linecap="round" />
<polyline points="802,509.6 843.3,497.4 857.9,507.1 882.2,504.7 889.4,495" fill="none" stroke="#ffffff" stroke-width="1.4" stroke-linejoin="round" stroke-linecap="round" />
<polyline points="768,519.3 802,526.6 823.9,529 843.3,521.7 865.2,516.9 896.7,509.6" fill="none" stroke="#ffffff" stroke-width="1.4" stroke-linejoin="round" stroke-linecap="round" />
<polyline points="840.9,487.7 838.4,509.6 848.2,524.2 838.4,548.4 843.3,550.9 853,536.3 865.2,538.7 889.4,533.9" fill="none" stroke="#ffffff" stroke-width="1.4" stroke-linejoin="round" stroke-linecap="round" />
<polyline points="819,497.4 826.3,521.7 821.4,531.4 828.7,536.3" fill="none" stroke="#ffffff" stroke-width="1.4" stroke-linejoin="round" stroke-linecap="round" />
<polyline points="770,478 785,472 797,473" fill="none" stroke="#ffffff" stroke-width="1.4" stroke-linejoin="round" stroke-linecap="round" />
<polyline points="783,461 792,479 797,500 800,510" fill="none" stroke="#ffffff" stroke-width="1.4" stroke-linejoin="round" stroke-linecap="round" />
<polyline points="815,461 818,478" fill="none" stroke="#ffffff" stroke-width="1.4" stroke-linejoin="round" stroke-linecap="round" />
<polyline points="870,461 872,480 880,490" fill="none" stroke="#ffffff" stroke-width="1.4" stroke-linejoin="round" stroke-linecap="round" />
<polyline points="860,470 895,470" fill="none" stroke="#ffffff" stroke-width="1.4" stroke-linejoin="round" stroke-linecap="round" />
<polyline points="900,505 896,540" fill="none" stroke="#ffffff" stroke-width="1.4" stroke-linejoin="round" stroke-linecap="round" />
<polyline points="769,409.5 776.3,422.2 783.6,436.8 789.7,452.6 790.9,461" fill="none" stroke="#ffffff" stroke-width="1.4" stroke-linejoin="round" stroke-linecap="round" />
<polyline points="781.2,408.9 773.9,415 769,418.6" fill="none" stroke="#ffffff" stroke-width="1.4" stroke-linejoin="round" stroke-linecap="round" />
<polyline points="773.9,415 789.7,427.1" fill="none" stroke="#ffffff" stroke-width="1.4" stroke-linejoin="round" stroke-linecap="round" />
<polyline points="794.5,398 797,408.9 794.5,411.3 783.6,427.1 781.2,435.6 773.9,445.3 776.3,461" fill="none" stroke="#ffffff" stroke-width="1.4" stroke-linejoin="round" stroke-linecap="round" />
<polyline points="794.5,398 815.2,400.4 821.2,399.2 826.1,387" fill="none" stroke="#ffffff" stroke-width="1.4" stroke-linejoin="round" stroke-linecap="round" />
<polyline points="797,408.9 815.2,416.2 826.1,419.8 837,414.9 841.9,421" fill="none" stroke="#ffffff" stroke-width="1.4" stroke-linejoin="round" stroke-linecap="round" />
<polyline points="815.2,400.4 812.7,417.4 805.5,433.2 799.4,444.1 793.3,461" fill="none" stroke="#ffffff" stroke-width="1.4" stroke-linejoin="round" stroke-linecap="round" />
<polyline points="821.2,399.2 824.9,416.2 829.8,423.5 829.8,438" fill="none" stroke="#ffffff" stroke-width="1.4" stroke-linejoin="round" stroke-linecap="round" />
<polyline points="769,427.1 782.4,428.3 803,430.7 815.2,428.3 829.8,423.5" fill="none" stroke="#ffffff" stroke-width="1.4" stroke-linejoin="round" stroke-linecap="round" />
<polyline points="773.9,445.3 793.3,442.9 815.2,444.1 841.9,441.7 855,438" fill="none" stroke="#ffffff" stroke-width="1.4" stroke-linejoin="round" stroke-linecap="round" />
<polyline points="805.5,433.2 809.1,461" fill="none" stroke="#ffffff" stroke-width="1.4" stroke-linejoin="round" stroke-linecap="round" />
<polyline points="815.2,428.3 817.6,461" fill="none" stroke="#ffffff" stroke-width="1.4" stroke-linejoin="round" stroke-linecap="round" />
<polyline points="829.8,438 837,461" fill="none" stroke="#ffffff" stroke-width="1.4" stroke-linejoin="round" stroke-linecap="round" />
<polyline points="799.4,387 807.9,400.4" fill="none" stroke="#ffffff" stroke-width="1.4" stroke-linejoin="round" stroke-linecap="round" />
<polyline points="817.6,387 815.2,400.4" fill="none" stroke="#ffffff" stroke-width="1.4" stroke-linejoin="round" stroke-linecap="round" />
<polyline points="834.6,387 832.2,399.2 841.9,405.2 855,400.4" fill="none" stroke="#ffffff" stroke-width="1.4" stroke-linejoin="round" stroke-linecap="round" />
<polyline points="841.9,405.2 846.8,415 855,417.4" fill="none" stroke="#ffffff" stroke-width="1.4" stroke-linejoin="round" stroke-linecap="round" />
<polyline points="780.704,341.418 777.744,351.284 774.097,361.15 774.235,371.015 769.776,380.881" fill="none" stroke="#ffffff" stroke-width="1.3" stroke-linejoin="round" stroke-linecap="round" />
<polyline points="789.723,340.657 785.779,352.029 785.847,363.402 787.439,374.775 788.611,386.147" fill="none" stroke="#ffffff" stroke-width="1.3" stroke-linejoin="round" stroke-linecap="round" />
<polyline points="803.98,343.729 799.203,352.252 796.544,360.776 794.48,369.3 793.501,377.823" fill="none" stroke="#ffffff" stroke-width="1.3" stroke-linejoin="round" stroke-linecap="round" />
<polyline points="807.872,341.699 809.44,351.657 807.707,361.616 808.383,371.574 809.806,381.533" fill="none" stroke="#ffffff" stroke-width="1.3" stroke-linejoin="round" stroke-linecap="round" />
<polyline points="818.499,344.019 818.16,354.026 821.061,364.033 821.013,374.04 819.166,384.047" fill="none" stroke="#ffffff" stroke-width="1.3" stroke-linejoin="round" stroke-linecap="round" />
<polyline points="826.433,344.937 830.865,353.396 827.525,361.855 829.996,370.314 832.661,378.774" fill="none" stroke="#ffffff" stroke-width="1.3" stroke-linejoin="round" stroke-linecap="round" />
<polyline points="837.253,344.596 837.179,355.105 839.575,365.614 837.65,376.123 840.442,386.631" fill="none" stroke="#ffffff" stroke-width="1.3" stroke-linejoin="round" stroke-linecap="round" />
<polyline points="849.341,345.451 848.571,354.766 851.105,364.081 849.671,373.397 854.459,382.712" fill="none" stroke="#ffffff" stroke-width="1.3" stroke-linejoin="round" stroke-linecap="round" />
<polyline points="788.485,347.142 801.703,347.418 814.921,343.048 828.138,344.105 841.356,341.498" fill="none" stroke="#ffffff" stroke-width="1.3" stroke-linejoin="round" stroke-linecap="round" />
<polyline points="772.979,356.059 790.296,354.208 807.613,354.043 824.93,347.521 842.247,346.796" fill="none" stroke="#ffffff" stroke-width="1.3" stroke-linejoin="round" stroke-linecap="round" />
<polyline points="786.664,358.655 800.348,361.331 814.032,363.041 827.716,367.66 841.4,370.02" fill="none" stroke="#ffffff" stroke-width="1.3" stroke-linejoin="round" stroke-linecap="round" />
<polyline points="774.925,375.145 793.981,373.633 813.037,369.968 832.093,366.642 851.15,366.684" fill="none" stroke="#ffffff" stroke-width="1.3" stroke-linejoin="round" stroke-linecap="round" />
<polyline points="781.401,379.522 795.846,381.134 810.29,382.527 824.734,380.517 839.179,385.845" fill="none" stroke="#ffffff" stroke-width="1.3" stroke-linejoin="round" stroke-linecap="round" />
<polyline points="863.223,362.737 860.581,384.367 862.071,405.996 858.047,427.626 856.909,449.255" fill="none" stroke="#ffffff" stroke-width="1.3" stroke-linejoin="round" stroke-linecap="round" />
<polyline points="879.125,344.22 873.34,373.455 866.551,402.689 861.322,431.924 853.091,461.159" fill="none" stroke="#ffffff" stroke-width="1.3" stroke-linejoin="round" stroke-linecap="round" />
<polyline points="887.932,355.966 884.604,383.509 879.986,411.052 880.205,438.595 877.514,466.138" fill="none" stroke="#ffffff" stroke-width="1.3" stroke-linejoin="round" stroke-linecap="round" />
<polyline points="900.499,352.58 894.382,381.377 891.474,410.173 882.409,438.97 875.99,467.767" fill="none" stroke="#ffffff" stroke-width="1.3" stroke-linejoin="round" stroke-linecap="round" />
<polyline points="898.676,353.735 901.789,381.848 904.647,409.962 904.678,438.075 904.45,466.188" fill="none" stroke="#ffffff" stroke-width="1.3" stroke-linejoin="round" stroke-linecap="round" />
<polyline points="901.074,349.534 906.254,378.565 907.954,407.596 911.368,436.626 918.258,465.657" fill="none" stroke="#ffffff" stroke-width="1.3" stroke-linejoin="round" stroke-linecap="round" />
<polyline points="916.71,362.168 917.601,383.887 922.513,405.605 925.159,427.324 926.983,449.042" fill="none" stroke="#ffffff" stroke-width="1.3" stroke-linejoin="round" stroke-linecap="round" />
<polyline points="924.339,347.265 924.584,376.264 929.825,405.263 932.871,434.262 935.498,463.261" fill="none" stroke="#ffffff" stroke-width="1.3" stroke-linejoin="round" stroke-linecap="round" />
<polyline points="946.82,345.732 944.431,375.325 941.325,404.917 936.538,434.51 930.245,464.102" fill="none" stroke="#ffffff" stroke-width="1.3" stroke-linejoin="round" stroke-linecap="round" />
<polyline points="869.394,345.851 887.914,346.403 906.434,347.432 924.954,347.261 943.474,346.953" fill="none" stroke="#ffffff" stroke-width="1.3" stroke-linejoin="round" stroke-linecap="round" />
<polyline points="860.985,350.609 878.385,353.92 895.785,359.93 913.185,362.102 930.585,362.611" fill="none" stroke="#ffffff" stroke-width="1.3" stroke-linejoin="round" stroke-linecap="round" />
<polyline points="857.721,359.098 875.469,364.675 893.217,367.62 910.965,368.181 928.713,368.822" fill="none" stroke="#ffffff" stroke-width="1.3" stroke-linejoin="round" stroke-linecap="round" />
<polyline points="857.358,370.679 879.204,374.178 901.051,380.328 922.897,381.944 944.744,388.249" fill="none" stroke="#ffffff" stroke-width="1.3" stroke-linejoin="round" stroke-linecap="round" />
<polyline points="858.799,392.465 879.216,392.504 899.633,389.178 920.05,388.285 940.467,385.155" fill="none" stroke="#ffffff" stroke-width="1.3" stroke-linejoin="round" stroke-linecap="round" />
<polyline points="861.368,402.398 880.214,400.608 899.061,403.722 917.907,402.27 936.753,403.049" fill="none" stroke="#ffffff" stroke-width="1.3" stroke-linejoin="round" stroke-linecap="round" />
<polyline points="855.337,413.234 875.772,414.62 896.207,408.896 916.642,407.811 937.078,406.48" fill="none" stroke="#ffffff" stroke-width="1.3" stroke-linejoin="round" stroke-linecap="round" />
<polyline points="860.868,422.124 879.568,419.148 898.269,421.834 916.969,420.69 935.67,421.246" fill="none" stroke="#ffffff" stroke-width="1.3" stroke-linejoin="round" stroke-linecap="round" />
<polyline points="864.139,431.828 881.826,431.321 899.514,434.007 917.201,435.312 934.889,437.184" fill="none" stroke="#ffffff" stroke-width="1.3" stroke-linejoin="round" stroke-linecap="round" />
<polyline points="863.142,446.405 881.207,445.035 899.272,445.763 917.336,445.933 935.401,442.361" fill="none" stroke="#ffffff" stroke-width="1.3" stroke-linejoin="round" stroke-linecap="round" />
<polyline points="871.979,456.358 886.454,455.859 900.929,451.91 915.405,450.65 929.88,447.711" fill="none" stroke="#ffffff" stroke-width="1.3" stroke-linejoin="round" stroke-linecap="round" />
<polyline points="869.111,470.64 884.047,468.296 898.982,463.646 913.918,465.28 928.854,463.64" fill="none" stroke="#ffffff" stroke-width="1.3" stroke-linejoin="round" stroke-linecap="round" />
<polyline points="851.501,353.335 850.789,366.107 848.024,378.88 849.023,391.652 849.278,404.424" fill="none" stroke="#ffffff" stroke-width="1" stroke-linejoin="round" stroke-linecap="round" />
<polyline points="855.447,342.74 859.329,358.44 860.618,374.141 860.673,389.841 863.67,405.541" fill="none" stroke="#ffffff" stroke-width="1" stroke-linejoin="round" stroke-linecap="round" />
<polyline points="866.639,347.172 871.127,362.654 871.415,378.136 875.813,393.618 878.664,409.1" fill="none" stroke="#ffffff" stroke-width="1" stroke-linejoin="round" stroke-linecap="round" />
<polyline points="887.513,343.786 886.518,359.886 883.65,375.986 882.588,392.086 885.041,408.186" fill="none" stroke="#ffffff" stroke-width="1" stroke-linejoin="round" stroke-linecap="round" />
<polyline points="902.055,349.806 897.744,364.541 893.072,379.277 893.276,394.012 888.8,408.748" fill="none" stroke="#ffffff" stroke-width="1" stroke-linejoin="round" stroke-linecap="round" />
<polyline points="845.921,353.529 857.086,349.957 868.251,347.563 879.416,346.483 890.581,346.042" fill="none" stroke="#ffffff" stroke-width="1" stroke-linejoin="round" stroke-linecap="round" />
<polyline points="846.421,361.009 858.367,359.967 870.313,358.273 882.258,357.629 894.204,356.82" fill="none" stroke="#ffffff" stroke-width="1" stroke-linejoin="round" stroke-linecap="round" />
<polyline points="853.354,372.931 864.218,373.608 875.082,372.293 885.946,373.222 896.81,372.282" fill="none" stroke="#ffffff" stroke-width="1" stroke-linejoin="round" stroke-linecap="round" />
<polyline points="851.062,391.907 862.775,388.476 874.489,391.208 886.202,389.543 897.916,389.676" fill="none" stroke="#ffffff" stroke-width="1" stroke-linejoin="round" stroke-linecap="round" />
<polyline points="849.324,404.575 860.6,402.863 871.875,405.668 883.151,406.012 894.426,406.576" fill="none" stroke="#ffffff" stroke-width="1" stroke-linejoin="round" stroke-linecap="round" />
<polyline points="911.923,302.78 914.242,311.977 909.628,321.173 907.372,330.369 905.198,339.565" fill="none" stroke="#ffffff" stroke-width="1.3" stroke-linejoin="round" stroke-linecap="round" />
<polyline points="927.009,306.964 926.56,313.882 926.804,320.8 924.239,327.718 925.214,334.636" fill="none" stroke="#ffffff" stroke-width="1.3" stroke-linejoin="round" stroke-linecap="round" />
<polyline points="935.091,307.694 939.562,313.825 935.77,319.957 936.197,326.088 934.208,332.219" fill="none" stroke="#ffffff" stroke-width="1.3" stroke-linejoin="round" stroke-linecap="round" />
<polyline points="908.797,307.909 916.842,303.948 924.888,304.541 932.933,302.533 940.978,303.429" fill="none" stroke="#ffffff" stroke-width="1.3" stroke-linejoin="round" stroke-linecap="round" />
<polyline points="905.18,319.761 914.526,318.424 923.873,318.753 933.22,317.196 942.566,316.548" fill="none" stroke="#ffffff" stroke-width="1.3" stroke-linejoin="round" stroke-linecap="round" />
<polyline points="908.116,330.182 916.685,335.291 925.254,336.467 933.822,334.532 942.391,340.942" fill="none" stroke="#ffffff" stroke-width="1.3" stroke-linejoin="round" stroke-linecap="round" />
<polyline points="780,345 830,400" fill="none" stroke="#ffffff" stroke-width="1.2" stroke-linejoin="round" stroke-linecap="round" />
<polyline points="800,345 870,440" fill="none" stroke="#ffffff" stroke-width="1.2" stroke-linejoin="round" stroke-linecap="round" />
<polyline points="870,345 935,420" fill="none" stroke="#ffffff" stroke-width="1.2" stroke-linejoin="round" stroke-linecap="round" />
<polyline points="860,400 800,455" fill="none" stroke="#ffffff" stroke-width="1.2" stroke-linejoin="round" stroke-linecap="round" />
<polyline points="930,350 880,455" fill="none" stroke="#ffffff" stroke-width="1.2" stroke-linejoin="round" stroke-linecap="round" />
<polyline points="770,420 820,350" fill="none" stroke="#ffffff" stroke-width="1.2" stroke-linejoin="round" stroke-linecap="round" />
<polyline points="895,410 945,460" fill="none" stroke="#ffffff" stroke-width="1.2" stroke-linejoin="round" stroke-linecap="round" />
<polyline points="780,290 820,335" fill="none" stroke="#ffffff" stroke-width="1.2" stroke-linejoin="round" stroke-linecap="round" />
<polyline points="760,440 790,470" fill="none" stroke="#ffffff" stroke-width="1.2" stroke-linejoin="round" stroke-linecap="round" />
<polyline points="777.5,254.8 786,248.7 798.2,254.8 799.4,263.3 815.2,271.8 827.3,274.2 839.5,273 840.7,285.2 855,293.7" fill="none" stroke="#ffffff" stroke-width="1.3" stroke-linejoin="round" stroke-linecap="round" />
<polyline points="769,290 786,282.7 793.3,273 799.4,263.3" fill="none" stroke="#ffffff" stroke-width="1.3" stroke-linejoin="round" stroke-linecap="round" />
<polyline points="793.3,273 797,279.1 803,294.9 820,313" fill="none" stroke="#ffffff" stroke-width="1.3" stroke-linejoin="round" stroke-linecap="round" />
<polyline points="814,275.5 799.4,313" fill="none" stroke="#ffffff" stroke-width="1.3" stroke-linejoin="round" stroke-linecap="round" />
<polyline points="817.6,258.4 828.5,263.3 820,275.5" fill="none" stroke="#ffffff" stroke-width="1.3" stroke-linejoin="round" stroke-linecap="round" />
<polyline points="821.2,280.3 826.1,290 828.5,313" fill="none" stroke="#ffffff" stroke-width="1.3" stroke-linejoin="round" stroke-linecap="round" />
<polyline points="827.3,290 855,302.2" fill="none" stroke="#ffffff" stroke-width="1.3" stroke-linejoin="round" stroke-linecap="round" />
<polyline points="769,273 782.4,280.3 788.4,290 805.5,313" fill="none" stroke="#ffffff" stroke-width="1.3" stroke-linejoin="round" stroke-linecap="round" />
<polyline points="805.5,326.4 790,337" fill="none" stroke="#ffffff" stroke-width="1.3" stroke-linejoin="round" stroke-linecap="round" />
<polyline points="830,318 840,337" fill="none" stroke="#ffffff" stroke-width="1.3" stroke-linejoin="round" stroke-linecap="round" />
<polyline points="810,315 818,337" fill="none" stroke="#ffffff" stroke-width="1.3" stroke-linejoin="round" stroke-linecap="round" />
<polyline points="855,300 870,280 892,270" fill="none" stroke="#ffffff" stroke-width="1.3" stroke-linejoin="round" stroke-linecap="round" />
<polyline points="870,250 892,262" fill="none" stroke="#ffffff" stroke-width="1.3" stroke-linejoin="round" stroke-linecap="round" />
<polyline points="860,313 892,320" fill="none" stroke="#ffffff" stroke-width="1.3" stroke-linejoin="round" stroke-linecap="round" />
<polyline points="760,300 790,320" fill="none" stroke="#ffffff" stroke-width="1.3" stroke-linejoin="round" stroke-linecap="round" />
<polyline points="698.8,166 704.9,177.2 714,195.4 709.1,210 717,223.3 729.2,239 735.2,248.7 741.3,254.8 751.6,264.5 755.9,267 768,290 773.9,299.8 782.4,313 798.2,331.2 800.6,337.3" fill="none" stroke="#f9dc80" stroke-width="3.3" stroke-linejoin="round" stroke-linecap="round" />
<polyline points="717,223.3 706.1,228.2 700,239 690.3,241.4 683,244 676,246.3 669.9,262.1 652.9,291.2 643.2,298.5 631.5,308.7 626.6,315.6 622.1,322.5" fill="none" stroke="#f9dc80" stroke-width="3.3" stroke-linejoin="round" stroke-linecap="round" />
<polyline points="597,322.7 609.2,322.7 622.5,321.5 648,319.7 683,322.7 751,336.7 768,340 790.9,337.3" fill="none" stroke="#f9dc80" stroke-width="3.3" stroke-linejoin="round" stroke-linecap="round" />
<polyline points="790.9,337.3 805.5,326.4 815.2,327.6 822.5,322.7 832.2,317.9 851.6,317.9 854,313" fill="none" stroke="#f9dc80" stroke-width="3.3" stroke-linejoin="round" stroke-linecap="round" />
<polyline points="826.1,347.6 854,355.5 866,360.4" fill="none" stroke="#f9dc80" stroke-width="3.3" stroke-linejoin="round" stroke-linecap="round" />
<polyline points="597,324 604.3,325.2 599.4,339.7 597,349.5" fill="none" stroke="#f9dc80" stroke-width="3.3" stroke-linejoin="round" stroke-linecap="round" />
<polyline points="620,337.3 635.9,365.2 648,372.5 645.6,387 645,399.2 648,404 655.3,408.9 666.3,409.5 660.8,423.5 663.8,430.7 665,440.5 671.1,453.8 672.3,461 677.2,461 676.6,475.6 672.3,490.2 663.2,502.3 666.3,510.8 657.8,535 660.2,527 661.4,542.4 674.7,553.3 676,567.9 672.3,580 677.2,593.4 675.2,609" fill="none" stroke="#f9dc80" stroke-width="3.3" stroke-linejoin="round" stroke-linecap="round" />
<polyline points="622.1,322.5 620,337.3" fill="none" stroke="#f9dc80" stroke-width="3.3" stroke-linejoin="round" stroke-linecap="round" />
<polyline points="597,498.7 609.2,489 621.3,472 648,462.2 670,453.8 683,449 715.8,428.9 724.3,425.9 734,423.5 751,413.7 769,401.6 793.3,388.2 814,377 817.6,372.5 824.9,365.2 828.5,350.7 826.1,347.6" fill="none" stroke="#f9dc80" stroke-width="3.3" stroke-linejoin="round" stroke-linecap="round" />
<polyline points="597,565.4 621.3,572.7 640.7,577.6 655.3,575.2 669.9,577.6 672.3,580" fill="none" stroke="#f9dc80" stroke-width="3.3" stroke-linejoin="round" stroke-linecap="round" />
<polyline points="677.2,593.4 694.2,574 703.9,571.5 733,548.4 742.7,544.8 757.3,531.4 762,513.2 770.8,491.4 775,470.7 779.3,463.4 787,452 797,446.5" fill="none" stroke="#f9dc80" stroke-width="3.3" stroke-linejoin="round" stroke-linecap="round" />
<polyline points="881.3,166 877,180.8 875.3,191.7 872.2,211.2 871.6,217.2 875.3,230.6 870.8,239 870.2,247.5 866,254.8 858.6,267 852,286 853,306 855,313" fill="none" stroke="#f9dc80" stroke-width="3.3" stroke-linejoin="round" stroke-linecap="round" />
<polyline points="931.8,166 923.3,177.2 916,196.6 906.2,205 899,219.7 899.3,239 899.3,277.9 900.6,292.5 907.2,291.9 920.6,296.7 941,287.6" fill="none" stroke="#f9dc80" stroke-width="3.3" stroke-linejoin="round" stroke-linecap="round" />
<polyline points="900.6,292.5 891.5,294.9 872,299.1 855,305.8" fill="none" stroke="#f9dc80" stroke-width="3.3" stroke-linejoin="round" stroke-linecap="round" />
<polyline points="1040,166 1026,174.7 1012.9,180.8 1008,193 1005.6,213.6 1000.8,228.2 992,239 987.2,242.6 979.9,243.9 963.5,245 959.2,247.5 955.6,258.4 948.3,268.2 944.6,275.5 943.4,290 944.6,313 941,316.6 913.3,361.6 912,375 914.5,398 908.5,407.7 903.6,417.4 903,461 907.9,479.2 906.6,497.5 904.8,535 901.2,546 898.7,548.4 900,556.9 895,583.6 889,609" fill="none" stroke="#f9dc80" stroke-width="3.3" stroke-linejoin="round" stroke-linecap="round" />
<polyline points="898.7,548.4 897.5,550.8 890.2,563 884.2,576.3 885.4,588.5 880.5,589.7" fill="none" stroke="#f9dc80" stroke-width="3.3" stroke-linejoin="round" stroke-linecap="round" />
<polyline points="852.8,595.1 841.9,599.4 829.8,609" fill="none" stroke="#f9dc80" stroke-width="3.3" stroke-linejoin="round" stroke-linecap="round" />
<polyline points="941,336 923,349.5 912,351.9 941,347" fill="none" stroke="#f9dc80" stroke-width="3.3" stroke-linejoin="round" stroke-linecap="round" />
<polyline points="1021.2,313 1031.9,301 1048.9,287.6 1075.6,280.3 1080.5,280.3 1092.6,285.2 1108.4,296.1" fill="none" stroke="#f9dc80" stroke-width="3.3" stroke-linejoin="round" stroke-linecap="round" />
<polyline points="1092.6,285.2 1101.1,277.9 1104.8,260.9 1107.2,239 1109,228" fill="none" stroke="#f9dc80" stroke-width="3.3" stroke-linejoin="round" stroke-linecap="round" />
<polyline points="1021.2,313 1015,320.3 999.3,325.2 982.3,328.8 967.7,337.9 941,334.9" fill="none" stroke="#f9dc80" stroke-width="3.3" stroke-linejoin="round" stroke-linecap="round" />
<polyline points="1000.5,326.4 1001.8,331.2 1009,342.2 1014,351.9 1021.2,366.5 1034.3,366.5 1042.8,363.4 1046.4,365.2 1053.7,373.8 1062.2,382.3 1067.1,387 1057.4,391.9 1055,394.3 1053.7,404 1057.4,410 1057.4,417.4 1053.7,423.5 1046.4,429.5 1038,435.6 1027,438" fill="none" stroke="#f9dc80" stroke-width="3.3" stroke-linejoin="round" stroke-linecap="round" />
<polyline points="941,349.5 955.6,358 955.6,365.2 971.4,372.5 986,375 1021.2,366.5" fill="none" stroke="#f9dc80" stroke-width="3.3" stroke-linejoin="round" stroke-linecap="round" />
<polyline points="914.5,398 923,399.2 941,404 953.2,408.9 966.5,421 975,423.5 987.2,429.5 1018.8,438 1027,438 1031.9,450.2 1042.8,461 1065.3,485.3 1077.5,502.3 1096.9,503.5 1110,512" fill="none" stroke="#f9dc80" stroke-width="3.3" stroke-linejoin="round" stroke-linecap="round" />
<polyline points="833.4,478.6 855,486 875.7,490.2 906,493.8" fill="none" stroke="#f9dc80" stroke-width="3.3" stroke-linejoin="round" stroke-linecap="round" />
<rect x="756.5" y="291.7" width="28.4" height="7.6" fill="#fff" stroke="#444" stroke-width="0.9"/>
<text x="770.7" y="297.7" font-size="7.8" fill="#333" text-anchor="middle" font-family="Liberation Sans" textLength="24.4" lengthAdjust="spacingAndGlyphs">GO-070</text>
<rect x="751.5" y="334.8" width="28" height="8.1" fill="#fff" stroke="#444" stroke-width="0.9"/>
<text x="765.5" y="341.3" font-size="7.8" fill="#333" text-anchor="middle" font-family="Liberation Sans" textLength="24" lengthAdjust="spacingAndGlyphs">GO-060</text>
<rect x="753.25" y="232.25" width="139.5" height="105.8" fill="rgba(31,90,143,0.31)" stroke="#1f5a92" stroke-width="2.5"/>
<rect x="688.6" y="168.9" width="28.8" height="8.4" fill="#fff" stroke="#444" stroke-width="0.9"/>
<text x="703" y="175.7" font-size="7.8" fill="#333" text-anchor="middle" font-family="Liberation Sans" textLength="24.8" lengthAdjust="spacingAndGlyphs">GO-070</text>
<rect x="860" y="191.5" width="28.4" height="8.8" fill="#fff" stroke="#444" stroke-width="0.9"/>
<text x="874.2" y="198.7" font-size="7.8" fill="#333" text-anchor="middle" font-family="Liberation Sans" textLength="24.4" lengthAdjust="spacingAndGlyphs">GO-462</text>
<rect x="885.9" y="246.8" width="28.1" height="8.1" fill="#fff" stroke="#444" stroke-width="0.9"/>
<text x="899.95" y="253.3" font-size="7.8" fill="#333" text-anchor="middle" font-family="Liberation Sans" textLength="24.1" lengthAdjust="spacingAndGlyphs">GO-080</text>
<rect x="656.7" y="252.3" width="28" height="8.7" fill="#fff" stroke="#444" stroke-width="0.9"/>
<text x="670.7" y="259.4" font-size="7.8" fill="#333" text-anchor="middle" font-family="Liberation Sans" textLength="24" lengthAdjust="spacingAndGlyphs">GO-469</text>
<rect x="648.5" y="316.5" width="28.8" height="8.2" fill="#fff" stroke="#444" stroke-width="0.9"/>
<text x="662.9" y="323.1" font-size="7.8" fill="#333" text-anchor="middle" font-family="Liberation Sans" textLength="24.8" lengthAdjust="spacingAndGlyphs">GO-060</text>
<rect x="647.9" y="430.6" width="28.4" height="8.8" fill="#fff" stroke="#444" stroke-width="0.9"/>
<text x="662.1" y="437.8" font-size="7.8" fill="#333" text-anchor="middle" font-family="Liberation Sans" textLength="24.4" lengthAdjust="spacingAndGlyphs">GO-469</text>
<rect x="644.9" y="525.3" width="28.4" height="8.1" fill="#fff" stroke="#444" stroke-width="0.9"/>
<text x="659.1" y="531.8" font-size="7.8" fill="#333" text-anchor="middle" font-family="Liberation Sans" textLength="24.4" lengthAdjust="spacingAndGlyphs">GO-469</text>
<rect x="606.7" y="567.2" width="27.9" height="7.9" fill="#fff" stroke="#444" stroke-width="0.9"/>
<text x="620.65" y="573.5" font-size="7.8" fill="#333" text-anchor="middle" font-family="Liberation Sans" textLength="23.9" lengthAdjust="spacingAndGlyphs">GO-219</text>
<rect x="852.1" y="587.7" width="27.9" height="8.2" fill="#fff" stroke="#444" stroke-width="0.9"/>
<text x="866.05" y="594.3" font-size="7.8" fill="#333" text-anchor="middle" font-family="Liberation Sans" textLength="23.9" lengthAdjust="spacingAndGlyphs">GO-319</text>
<rect x="995.5" y="342.7" width="28.8" height="8.4" fill="#fff" stroke="#444" stroke-width="0.9"/>
<text x="1009.9" y="349.5" font-size="7.8" fill="#333" text-anchor="middle" font-family="Liberation Sans" textLength="24.8" lengthAdjust="spacingAndGlyphs">GO-537</text>
<rect x="988.9" y="366.6" width="28.4" height="8.5" fill="#fff" stroke="#444" stroke-width="0.9"/>
<text x="1003.1" y="373.5" font-size="7.8" fill="#333" text-anchor="middle" font-family="Liberation Sans" textLength="24.4" lengthAdjust="spacingAndGlyphs">GO-403</text>
<rect x="1038.2" y="420.5" width="28.2" height="8.2" fill="#fff" stroke="#444" stroke-width="0.9"/>
<text x="1052.3" y="427.1" font-size="7.8" fill="#333" text-anchor="middle" font-family="Liberation Sans" textLength="24.2" lengthAdjust="spacingAndGlyphs">GO-536</text>
<rect x="659.5" y="606.7" width="29" height="5" fill="#fff" stroke="#444" stroke-width="0.9"/>
<rect x="1107.3" y="212.3" width="6" height="9.2" fill="#fff" stroke="#444" stroke-width="0.9"/>
<path d="M963.7 237.5 h16 v8 q0 2.5 -8 3 q-8 -0.5 -8 -3 z" fill="#fff" stroke="#555" stroke-width="0.9"/>
<text x="971.7" y="245.6" font-size="8" fill="#333" text-anchor="middle" font-family="Liberation Sans">153</text>
<path d="M1018.8 300.5 h16 v8 q0 2.5 -8 3 q-8 -0.5 -8 -3 z" fill="#fff" stroke="#555" stroke-width="0.9"/>
<text x="1026.8" y="308.6" font-size="8" fill="#333" text-anchor="middle" font-family="Liberation Sans">457</text>
<path d="M771.4 389 h17 v8 q0 2.5 -8.5 3 q-8.5 -0.5 -8.5 -3 z" fill="#fff" stroke="#555" stroke-width="0.9"/>
<text x="779.9" y="397.1" font-size="8" fill="#333" text-anchor="middle" font-family="Liberation Sans">060</text>
<path d="M906.2 384 h16 v8 q0 2.5 -8 3 q-8 -0.5 -8 -3 z" fill="#fff" stroke="#555" stroke-width="0.9"/>
<text x="914.2" y="392.1" font-size="8" fill="#333" text-anchor="middle" font-family="Liberation Sans">153</text>
<path d="M1019.5 439 h16 v8 q0 2.5 -8 3 q-8 -0.5 -8 -3 z" fill="#fff" stroke="#555" stroke-width="0.9"/>
<text x="1027.5" y="447.1" font-size="8" fill="#333" text-anchor="middle" font-family="Liberation Sans">352</text>
<text x="597" y="336.7" font-size="10.2" fill="#5c5c5c" text-anchor="start" font-weight="normal" font-family="Liberation Sans" stroke="#fff" stroke-opacity="0.85" stroke-width="2" paint-order="stroke" textLength="41" lengthAdjust="spacingAndGlyphs">Trindade</text>
<text x="1007.4" y="188.7" font-size="10.2" fill="#2e8b46" text-anchor="middle" font-weight="normal" font-family="Liberation Sans" stroke="#fff" stroke-opacity="0.85" stroke-width="2" paint-order="stroke" >Parque</text>
<text x="1007.4" y="199.6" font-size="10.2" fill="#2e8b46" text-anchor="middle" font-weight="normal" font-family="Liberation Sans" stroke="#fff" stroke-opacity="0.85" stroke-width="2" paint-order="stroke" >Estadual</text>
<text x="1007.4" y="211.2" font-size="10.2" fill="#2e8b46" text-anchor="middle" font-weight="normal" font-family="Liberation Sans" stroke="#fff" stroke-opacity="0.85" stroke-width="2" paint-order="stroke" >Altamiro</text>
<text x="1007.4" y="222.7" font-size="10.2" fill="#2e8b46" text-anchor="middle" font-weight="normal" font-family="Liberation Sans" stroke="#fff" stroke-opacity="0.85" stroke-width="2" paint-order="stroke" >de Moura...</text>
<text x="1045.8" y="402.8" font-size="11" fill="#555" text-anchor="start" font-weight="normal" font-family="Liberation Sans" stroke="#fff" stroke-opacity="0.85" stroke-width="2" paint-order="stroke" textLength="62" lengthAdjust="spacingAndGlyphs">Sen. Canedo</text>
<text x="674" y="463.4" font-size="9.5" fill="#555" text-anchor="middle" font-weight="normal" font-family="Liberation Sans" stroke="#fff" stroke-opacity="0.85" stroke-width="2" paint-order="stroke" >Abadia</text>
<text x="674" y="473.8" font-size="9.5" fill="#555" text-anchor="middle" font-weight="normal" font-family="Liberation Sans" stroke="#fff" stroke-opacity="0.85" stroke-width="2" paint-order="stroke" >de Goiás</text>
<text x="866.5" y="447.8" font-size="9.5" fill="#555" text-anchor="start" font-weight="normal" font-family="Liberation Sans" stroke="#fff" stroke-opacity="0.85" stroke-width="2" paint-order="stroke" >Nova Brasília</text>
<text x="895.7" y="531.5" font-size="11.8" fill="#555" text-anchor="middle" font-weight="normal" font-family="Liberation Sans" stroke="#fff" stroke-opacity="0.85" stroke-width="2" paint-order="stroke" textLength="56" lengthAdjust="spacingAndGlyphs">Aparecida</text>
<text x="896.3" y="544.7" font-size="11.8" fill="#555" text-anchor="middle" font-weight="normal" font-family="Liberation Sans" stroke="#fff" stroke-opacity="0.85" stroke-width="2" paint-order="stroke" textLength="59.6" lengthAdjust="spacingAndGlyphs">de Goiânia</text>
<text x="858" y="356.1" font-size="8.6" fill="#5a6d8c" text-anchor="start" font-weight="bold" font-family="Liberation Sans" stroke="#fff" stroke-opacity="0.85" stroke-width="2" paint-order="stroke" textLength="53.5" lengthAdjust="spacingAndGlyphs">ST. CENTRAL</text>
<text x="839.5" y="391.4" font-size="8.6" fill="#5a6d8c" text-anchor="start" font-weight="bold" font-family="Liberation Sans" stroke="#fff" stroke-opacity="0.85" stroke-width="2" paint-order="stroke" textLength="44" lengthAdjust="spacingAndGlyphs">ST. BUENO</text>
<text x="851" y="377" font-size="14.5" fill="#3c3c3c" text-anchor="start" font-weight="normal" font-family="Liberation Sans" stroke="#fff" stroke-opacity="0.85" stroke-width="2" paint-order="stroke" >Goiânia</text>
<path d="M614.2 331.4 C610.768 326.406 606.4 321.866 606.4 316.191 C606.4 306.203 622 306.203 622 316.191 C622 321.866 617.632 326.406 614.2 331.4 Z" fill="#c8c8c8" stroke="#555" stroke-width="0.95"/>
<path d="M616.7 331 C613.224 325.126 608.8 319.786 608.8 313.111 C608.8 301.363 624.6 301.363 624.6 313.111 C624.6 319.786 620.176 325.126 616.7 331 Z" fill="#c8c8c8" stroke="#555" stroke-width="0.95"/>
<path d="M733.4 367.7 C729.924 361.672 725.5 356.192 725.5 349.342 C725.5 337.286 741.3 337.286 741.3 349.342 C741.3 356.192 736.876 361.672 733.4 367.7 Z" fill="#c8c8c8" stroke="#555" stroke-width="0.95"/>
<path d="M833.65 341 C830.284 335.104 826 329.744 826 323.044 C826 311.252 841.3 311.252 841.3 323.044 C841.3 329.744 837.016 335.104 833.65 341 Z" fill="#c8c8c8" stroke="#555" stroke-width="0.95"/>
<path d="M842.2 351.9 C839.12 346.026 835.2 340.686 835.2 334.011 C835.2 322.263 849.2 322.263 849.2 334.011 C849.2 340.686 845.28 346.026 842.2 351.9 Z" fill="#c8c8c8" stroke="#555" stroke-width="0.95"/>
<path d="M863.5 339.1 C860.288 333.138 856.2 327.718 856.2 320.943 C856.2 309.019 870.8 309.019 870.8 320.943 C870.8 327.718 866.712 333.138 863.5 339.1 Z" fill="#c8c8c8" stroke="#555" stroke-width="0.95"/>
<path d="M877.5 337 C874.288 331.61 870.2 326.71 870.2 320.585 C870.2 309.805 884.8 309.805 884.8 320.585 C884.8 326.71 880.712 331.61 877.5 337 Z" fill="#c8c8c8" stroke="#555" stroke-width="0.95"/>
<path d="M872.65 371.3 C869.724 366.504 866 362.144 866 356.694 C866 347.102 879.3 347.102 879.3 356.694 C879.3 362.144 875.576 366.504 872.65 371.3 Z" fill="#c8c8c8" stroke="#555" stroke-width="0.95"/>
<path d="M873.25 359.2 C870.06 353.436 866 348.196 866 341.646 C866 330.118 880.5 330.118 880.5 341.646 C880.5 348.196 876.44 353.436 873.25 359.2 Z" fill="#c8c8c8" stroke="#555" stroke-width="0.95"/>
<path d="M918.15 342.2 C914.696 336.04 910.3 330.44 910.3 323.44 C910.3 311.12 926 311.12 926 323.44 C926 330.44 921.604 336.04 918.15 342.2 Z" fill="#c8c8c8" stroke="#555" stroke-width="0.95"/>
<path d="M819.1 372 C815.756 366.104 811.5 360.744 811.5 354.044 C811.5 342.252 826.7 342.252 826.7 354.044 C826.7 360.744 822.444 366.104 819.1 372 Z" fill="#c8c8c8" stroke="#555" stroke-width="0.95"/>
<path d="M799.4 396.7 C795.924 390.848 791.5 385.528 791.5 378.878 C791.5 367.174 807.3 367.174 807.3 378.878 C807.3 385.528 802.876 390.848 799.4 396.7 Z" fill="#c8c8c8" stroke="#555" stroke-width="0.95"/>
<path d="M910.6 387 C907.256 381.148 903 375.828 903 369.178 C903 357.474 918.2 357.474 918.2 369.178 C918.2 375.828 913.944 381.148 910.6 387 Z" fill="#c8c8c8" stroke="#555" stroke-width="0.95"/>
<path d="M902.65 394 C899.284 388.214 895 382.954 895 376.379 C895 364.807 910.3 364.807 910.3 376.379 C910.3 382.954 906.016 388.214 902.65 394 Z" fill="#c8c8c8" stroke="#555" stroke-width="0.95"/>
<path d="M866.1 399.5 C862.8 393.846 858.6 388.706 858.6 382.281 C858.6 370.973 873.6 370.973 873.6 382.281 C873.6 388.706 869.4 393.846 866.1 399.5 Z" fill="#c8c8c8" stroke="#555" stroke-width="0.95"/>
<path d="M855.4 439.3 C852.364 433.69 848.5 428.59 848.5 422.215 C848.5 410.995 862.3 410.995 862.3 422.215 C862.3 428.59 858.436 433.69 855.4 439.3 Z" fill="#c8c8c8" stroke="#555" stroke-width="0.95"/>
<path d="M850 431.3 C846.7 425.558 842.5 420.338 842.5 413.813 C842.5 402.329 857.5 402.329 857.5 413.813 C857.5 420.338 853.3 425.558 850 431.3 Z" fill="#c8c8c8" stroke="#555" stroke-width="0.95"/>
<path d="M846.75 451.4 C843.56 445.79 839.5 440.69 839.5 434.315 C839.5 423.095 854 423.095 854 434.315 C854 440.69 849.94 445.79 846.75 451.4 Z" fill="#c8c8c8" stroke="#555" stroke-width="0.95"/>
<path d="M823.7 447.8 C820.224 441.772 815.8 436.292 815.8 429.442 C815.8 417.386 831.6 417.386 831.6 429.442 C831.6 436.292 827.176 441.772 823.7 447.8 Z" fill="#c8c8c8" stroke="#555" stroke-width="0.95"/>
<path d="M902.65 442.9 C899.284 437.026 895 431.686 895 425.011 C895 413.263 910.3 413.263 910.3 425.011 C910.3 431.686 906.016 437.026 902.65 442.9 Z" fill="#c8c8c8" stroke="#555" stroke-width="0.95"/>
<path d="M918.5 462 C915.2 456.324 911 451.164 911 444.714 C911 433.362 926 433.362 926 444.714 C926 451.164 921.8 456.324 918.5 462 Z" fill="#c8c8c8" stroke="#555" stroke-width="0.95"/>
<path d="M786.6 475.6 C783.124 469.748 778.7 464.428 778.7 457.778 C778.7 446.074 794.5 446.074 794.5 457.778 C794.5 464.428 790.076 469.748 786.6 475.6 Z" fill="#c8c8c8" stroke="#555" stroke-width="0.95"/>
<path d="M802.1 509.6 C798.756 503.858 794.5 498.638 794.5 492.113 C794.5 480.629 809.7 480.629 809.7 492.113 C809.7 498.638 805.444 503.858 802.1 509.6 Z" fill="#c8c8c8" stroke="#555" stroke-width="0.95"/>
<path d="M764.95 518.1 C761.496 512.226 757.1 506.886 757.1 500.211 C757.1 488.463 772.8 488.463 772.8 500.211 C772.8 506.886 768.404 512.226 764.95 518.1 Z" fill="#c8c8c8" stroke="#555" stroke-width="0.95"/>
<path d="M882.6 501.7 C878.992 495.958 874.4 490.738 874.4 484.213 C874.4 472.729 890.8 472.729 890.8 484.213 C890.8 490.738 886.208 495.958 882.6 501.7 Z" fill="#c8c8c8" stroke="#555" stroke-width="0.95"/>
<path d="M770.75 279 C767.34 273.192 763 267.912 763 261.312 C763 249.696 778.5 249.696 778.5 261.312 C778.5 267.912 774.16 273.192 770.75 279 Z" fill="#1a5e9a" stroke="#24384d" stroke-width="0.95"/>
<path d="M853 288.8 C849.7 282.904 845.5 277.544 845.5 270.844 C845.5 259.052 860.5 259.052 860.5 270.844 C860.5 277.544 856.3 282.904 853 288.8 Z" fill="#1a5e9a" stroke="#24384d" stroke-width="0.95"/>
<path d="M864.4 312 C861.056 306.104 856.8 300.744 856.8 294.044 C856.8 282.252 872 282.252 872 294.044 C872 300.744 867.744 306.104 864.4 312 Z" fill="#1a5e9a" stroke="#24384d" stroke-width="0.95"/>
<path d="M883.3 383.5 L875.6 376.2 A10.2 10.2 0 1 1 891 376.2 Z" fill="#5b8a2f"/>
<circle cx="883.3" cy="369.2" r="7" fill="#fff"/>
<path d="M877.8 369 L883.3 364.3 L888.8 369" fill="none" stroke="#111" stroke-width="1.4"/>
<path d="M879.3 368.6 L883.3 365.4 L887.3 368.6 V374 H879.3Z" fill="#3d7a1f"/>
<rect x="882.2" y="371" width="2.2" height="3" fill="#111"/>
</svg><!--endmap-->

<!--ctrl-->
<div class="abs" style="left:605px;top:174px;width:32px;height:65px;background:#fff;border-radius:2px;box-shadow:0 1px 4px rgba(0,0,0,0.3)"></div>
<div class="abs" style="left:609px;top:206px;width:24px;height:1px;background:#e6e6e6"></div>
<div class="abs" style="left:614px;top:188px;width:14px;height:3px;background:#666"></div>
<div class="abs" style="left:619.5px;top:182.5px;width:3px;height:14px;background:#666"></div>
<div class="abs" style="left:614px;top:221px;width:14px;height:3px;background:#666"></div>
<div class="abs" style="left:1028px;top:170px;width:57px;height:19px;background:#fff;border-radius:2px 0 0 2px;box-shadow:0 1px 3px rgba(0,0,0,0.25)"></div>
<div class="abs" style="left:1046px;top:172px;width:1px;height:15px;background:#eee"></div>
<div class="abs" style="left:1066px;top:172px;width:1px;height:15px;background:#eee"></div>
<div class="abs" style="left:1085px;top:170px;width:20px;height:19px;background:#fff;box-shadow:0 1px 3px rgba(0,0,0,0.25)"></div>
<svg class="abs" style="left:1030px;top:171px" width="16" height="17" viewBox="0 0 16 17"><path d="M5 13.5 L2.5 9.5 Q2 8.5 3 8.3 L5 10 V4.2 Q5 3.3 5.9 3.3 Q6.7 3.3 6.7 4.2 V8 V3 Q6.7 2.2 7.6 2.2 Q8.4 2.2 8.4 3 V8 V3.6 Q8.4 2.8 9.3 2.8 Q10.1 2.8 10.1 3.6 V8 V4.6 Q10.1 3.9 10.9 3.9 Q11.7 3.9 11.7 4.6 V10.5 Q11.7 13 10 14.5 H6 Z" fill="#fff" stroke="#555" stroke-width="0.8"/></svg>
<svg class="abs" style="left:1049px;top:172px" width="15" height="15" viewBox="0 0 15 15"><path d="M2.5 3 L7.5 7.5 L12.5 5.5 L10 12 L4.5 10.5 Z" fill="#b3b3b3" stroke="#777" stroke-width="0.8"/></svg>
<svg class="abs" style="left:1068px;top:171px" width="16" height="17" viewBox="0 0 16 17"><circle cx="8" cy="9" r="4.8" fill="#bcbcbc" stroke="#999" stroke-width="0.8"/><circle cx="6" cy="2.8" r="0.6" fill="#555"/><circle cx="10" cy="2.8" r="0.6" fill="#555"/></svg>
<svg class="abs" style="left:1089px;top:173px" width="13" height="13" viewBox="0 0 13 13"><rect x="2.1" y="2.4" width="8.8" height="8.6" rx="1.2" fill="#8a8a8a" stroke="#1a1a1a" stroke-width="1.5"/></svg>
<div class="abs" style="left:1085px;top:165px;width:22px;height:27px;border:3px solid #ec1c24"></div>
<div class="abs" style="left:1050px;top:121px;width:58px;height:33px;border:3px solid #ec1c24"></div>
<svg class="abs" style="left:1062.5px;top:131.5px" width="14" height="14" viewBox="0 0 14 14"><path d="M3.2 4.2 A4.6 4.6 0 1 1 3.6 10.2" fill="none" stroke="#4a5360" stroke-width="1.4"/><path d="M1.6 1.8 V5.6 H5.4" fill="none" stroke="#4a5360" stroke-width="1.4"/></svg>
<svg class="abs" style="left:1088px;top:134px" width="10" height="10" viewBox="0 0 10 10"><path d="M1.5 1.5 L8.2 8.2 M8.2 1.5 L1.5 8.2" stroke="#ff0000" stroke-width="1.7"/></svg>
<!--endctrl-->
</body></html>
